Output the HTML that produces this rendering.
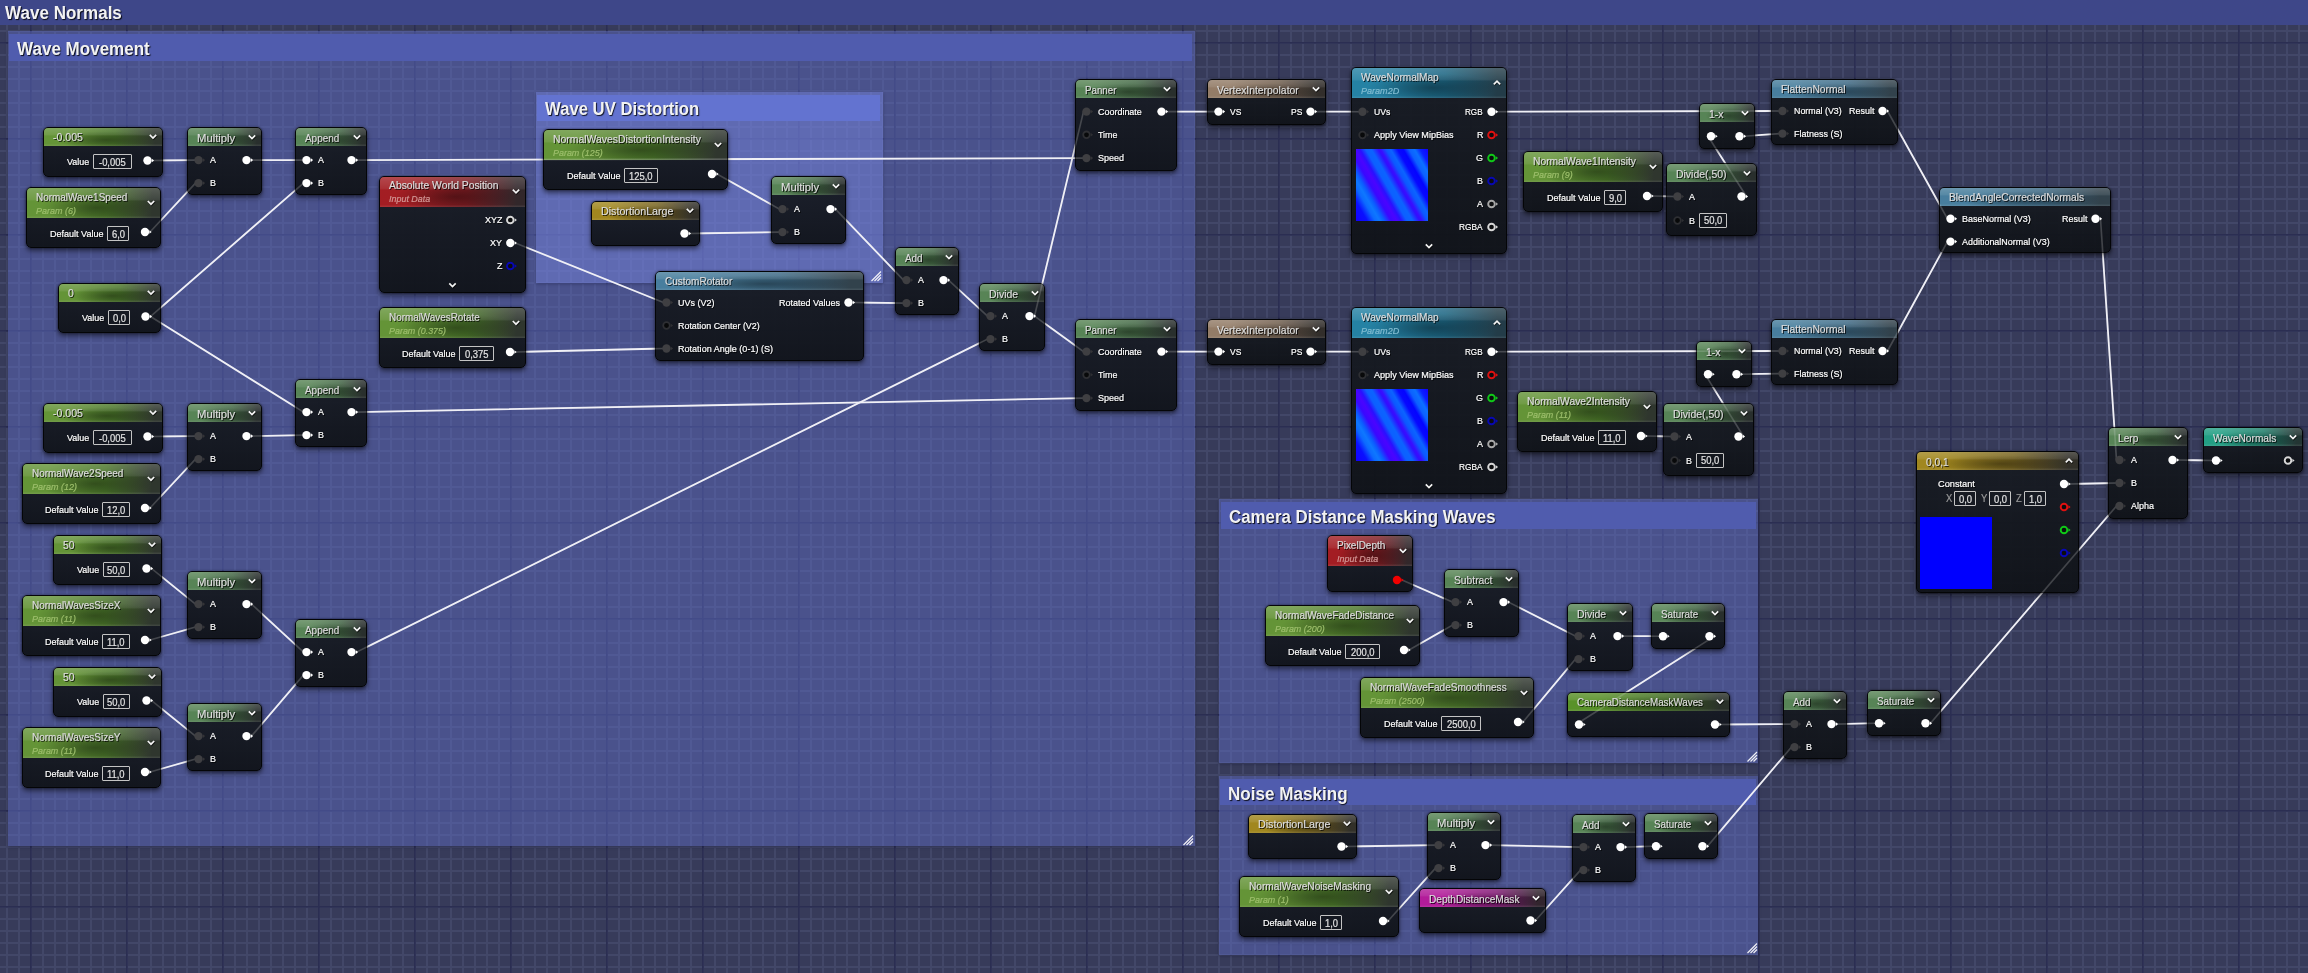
<!DOCTYPE html><html><head><meta charset="utf-8"><title>Wave Normals</title><style>

html,body{margin:0;padding:0}
body{width:2308px;height:973px;overflow:hidden;position:relative;background:#373b5a;font-family:"Liberation Sans",sans-serif}
#grid{position:absolute;left:0;top:0}
.t{position:absolute;white-space:nowrap;line-height:1.24;-webkit-text-stroke:.2px;transform-origin:0 50%;text-shadow:1px 1px 0 rgba(0,0,0,.8)}
.n{position:absolute;background:linear-gradient(180deg,rgba(23,27,34,.93),rgba(15,18,23,.94));border:1px solid #040507;border-radius:5px;box-shadow:0 3px 5px rgba(0,0,0,.5),0 0 2px rgba(0,0,0,.55)}
.h{position:absolute;left:0;top:0;right:0;border-radius:4px 4px 0 0;opacity:.97}
.vb{position:absolute;border:1px solid #c4c4c4;border-radius:1px}
.cb,.ct{position:absolute}
.cb{box-shadow:0 1px 3px rgba(10,10,40,.35)}
.tex{position:absolute;width:72px;height:72px;background:linear-gradient(60deg,#1400ff 0%,#0a10ff 10%,#0c6aff 17%,#0e78ff 21%,#0c5cff 25%,#3a08ff 31%,#4a04ff 36%,#2a10ff 40%,#0c60ff 45%,#0c64ff 50%,#3010ff 56%,#3a0cff 58%,#0c58ff 63%,#0c64ff 67%,#0808ff 73%,#0404ff 78%,#0c60ff 83%,#0c70ff 88%,#0a20ff 93%,#1000ff 100%)}
svg{position:absolute;left:0;top:0}
#wrap{position:absolute;left:0;top:0;width:2308px;height:973px;will-change:transform}
#wires line{stroke:#f0f0f6;stroke-width:1.8;stroke-linecap:round}
#wires2{opacity:.17}
#wires2 line{stroke:#f0f0f6;stroke-width:1.6}

</style></head><body>
<div id="wrap">
<svg id="grid" width="2308" height="973" viewBox="0 0 2308 973"><defs><pattern id="g1" width="12" height="12" patternUnits="userSpaceOnUse" x="6" y="6"><path d="M0 0H12V2H2V12H0Z" fill="#424768"/></pattern><pattern id="g2" width="96" height="96" patternUnits="userSpaceOnUse" x="30" y="42"><path d="M0 0H96V1.8H1.8V96H0Z" fill="#2b2e52"/></pattern></defs><rect width="2308" height="973" fill="#373b5a"/><rect width="2308" height="973" fill="url(#g1)"/><rect width="2308" height="973" fill="url(#g2)"/></svg>
<div class="ct" style="left:0;top:0;width:2308px;height:25px;background:#3e4789"></div>
<div class="t" style="left:5.0px;top:1.9px;font-size:18px;color:#f2f2f2;font-weight:bold;transform:scaleX(0.947);text-shadow:1px 1px 1px rgba(0,0,0,.85);-webkit-text-stroke:0;">Wave Normals</div>
<div class="cb" style="left:7.5px;top:31.3px;width:1187.0px;height:815.2px;background:rgba(97,110,201,.45)"></div>
<div class="ct" style="left:9.1px;top:34.3px;width:1182.8px;height:26.6px;background:#505cae"></div>
<div class="t" style="left:17.1px;top:38.4px;font-size:18px;color:#f2f2f2;font-weight:bold;transform:scaleX(0.946);text-shadow:1px 1px 1px rgba(0,0,0,.85);-webkit-text-stroke:0;">Wave Movement</div>
<div class="cb" style="left:535.5px;top:91.5px;width:347.0px;height:191.0px;background:rgba(140,155,255,.33)"></div>
<div class="ct" style="left:537.1px;top:94.5px;width:342.8px;height:26.6px;background:#6373d0"></div>
<div class="t" style="left:545.1px;top:97.6px;font-size:18px;color:#f2f2f2;font-weight:bold;transform:scaleX(0.927);text-shadow:1px 1px 1px rgba(0,0,0,.85);-webkit-text-stroke:0;">Wave UV Distortion</div>
<div class="cb" style="left:1219.2px;top:499.2px;width:539.3px;height:263.8px;background:rgba(97,110,201,.45)"></div>
<div class="ct" style="left:1220.8px;top:502.2px;width:535.0999999999999px;height:26.6px;background:#505cae"></div>
<div class="t" style="left:1228.8px;top:506.3px;font-size:18px;color:#f2f2f2;font-weight:bold;transform:scaleX(0.937);text-shadow:1px 1px 1px rgba(0,0,0,.85);-webkit-text-stroke:0;">Camera Distance Masking Waves</div>
<div class="cb" style="left:1218.8px;top:775.5px;width:539.7px;height:179.0px;background:rgba(97,110,201,.45)"></div>
<div class="ct" style="left:1220.3999999999999px;top:778.5px;width:535.5px;height:26.6px;background:#505cae"></div>
<div class="t" style="left:1228.4px;top:782.6px;font-size:18px;color:#f2f2f2;font-weight:bold;transform:scaleX(0.949);text-shadow:1px 1px 1px rgba(0,0,0,.85);-webkit-text-stroke:0;">Noise Masking</div>
<svg width="2308" height="973" viewBox="0 0 2308 973"><line x1="1183.5" y1="845.0" x2="1193.0" y2="835.5" stroke="#f0f0f6" stroke-width="1.15"/>
<line x1="1186.5" y1="845.0" x2="1193.0" y2="838.5" stroke="#f0f0f6" stroke-width="1.15"/>
<line x1="1189.5" y1="845.0" x2="1193.0" y2="841.5" stroke="#f0f0f6" stroke-width="1.15"/>
<line x1="871.5" y1="281.0" x2="881.0" y2="271.5" stroke="#f0f0f6" stroke-width="1.15"/>
<line x1="874.5" y1="281.0" x2="881.0" y2="274.5" stroke="#f0f0f6" stroke-width="1.15"/>
<line x1="877.5" y1="281.0" x2="881.0" y2="277.5" stroke="#f0f0f6" stroke-width="1.15"/>
<line x1="1747.5" y1="761.5" x2="1757.0" y2="752.0" stroke="#f0f0f6" stroke-width="1.15"/>
<line x1="1750.5" y1="761.5" x2="1757.0" y2="755.0" stroke="#f0f0f6" stroke-width="1.15"/>
<line x1="1753.5" y1="761.5" x2="1757.0" y2="758.0" stroke="#f0f0f6" stroke-width="1.15"/>
<line x1="1747.5" y1="953.0" x2="1757.0" y2="943.5" stroke="#f0f0f6" stroke-width="1.15"/>
<line x1="1750.5" y1="953.0" x2="1757.0" y2="946.5" stroke="#f0f0f6" stroke-width="1.15"/>
<line x1="1753.5" y1="953.0" x2="1757.0" y2="949.5" stroke="#f0f0f6" stroke-width="1.15"/></svg>
<svg id="wires" width="2308" height="973" viewBox="0 0 2308 973"><line x1="152.5" y1="160.5" x2="195.5" y2="160.1"/>
<line x1="150.0" y1="232" x2="195.5" y2="183.1"/>
<line x1="251.5" y1="160.1" x2="303.5" y2="160.1"/>
<line x1="150.5" y1="316.5" x2="303.5" y2="183.1"/>
<line x1="150.5" y1="316.5" x2="303.5" y2="412.1"/>
<line x1="152.5" y1="436.5" x2="195.5" y2="436.1"/>
<line x1="150.0" y1="508" x2="195.5" y2="459.1"/>
<line x1="251.5" y1="436.1" x2="303.5" y2="435.1"/>
<line x1="356.5" y1="160.1" x2="1083.5" y2="158.1"/>
<line x1="356.5" y1="412.1" x2="1083.5" y2="398.1"/>
<line x1="151.5" y1="568.5" x2="195.5" y2="604.1"/>
<line x1="150.0" y1="640" x2="195.5" y2="627.1"/>
<line x1="251.5" y1="604.1" x2="303.5" y2="652.1"/>
<line x1="151.5" y1="700.5" x2="195.5" y2="736.1"/>
<line x1="150.0" y1="772" x2="195.5" y2="759.1"/>
<line x1="251.5" y1="736.1" x2="303.5" y2="675.1"/>
<line x1="356.5" y1="652.1" x2="987.5" y2="339.1"/>
<line x1="515.3" y1="243" x2="663.5" y2="302.5"/>
<line x1="515.0" y1="352" x2="663.5" y2="348.5"/>
<line x1="717.0" y1="174" x2="779.5" y2="209.1"/>
<line x1="689.5" y1="233.5" x2="779.5" y2="232.1"/>
<line x1="835.5" y1="209.1" x2="903.5" y2="280.1"/>
<line x1="853.5" y1="302.5" x2="903.5" y2="303.1"/>
<line x1="948.5" y1="280.1" x2="987.5" y2="316.1"/>
<line x1="1034.5" y1="316.1" x2="1083.5" y2="111.6"/>
<line x1="1034.5" y1="316.1" x2="1083.5" y2="351.6"/>
<line x1="1166.5" y1="111.6" x2="1215.5" y2="111.6"/>
<line x1="1315.5" y1="111.6" x2="1359.5" y2="111.7"/>
<line x1="1496.5" y1="111.7" x2="1779.5" y2="111"/>
<line x1="1166.5" y1="351.6" x2="1215.5" y2="351.6"/>
<line x1="1315.5" y1="351.6" x2="1359.5" y2="351.7"/>
<line x1="1496.5" y1="351.7" x2="1779.5" y2="351"/>
<line x1="1652.0" y1="196" x2="1674.5" y2="196.5"/>
<line x1="1746.5" y1="196.5" x2="1708" y2="136.2"/>
<line x1="1744.5" y1="136.2" x2="1779.5" y2="133.6"/>
<line x1="1646.0" y1="436" x2="1671.5" y2="436.5"/>
<line x1="1743.5" y1="436.5" x2="1705" y2="374.2"/>
<line x1="1741.5" y1="374.2" x2="1779.5" y2="373.6"/>
<line x1="1887.5" y1="111" x2="1947.5" y2="218.8"/>
<line x1="1887.5" y1="351" x2="1947.5" y2="241.6"/>
<line x1="2100.5" y1="218.8" x2="2116.5" y2="460"/>
<line x1="2069" y1="484" x2="2116.5" y2="483"/>
<line x1="1930.5" y1="723.2" x2="2116.5" y2="506"/>
<line x1="2177.5" y1="460" x2="2213" y2="460.5"/>
<line x1="1402" y1="580" x2="1452.5" y2="602.1"/>
<line x1="1409.0" y1="650" x2="1452.5" y2="625.1"/>
<line x1="1508.5" y1="602.1" x2="1575.5" y2="636.1"/>
<line x1="1523.0" y1="722" x2="1575.5" y2="659.1"/>
<line x1="1622.5" y1="636.1" x2="1660" y2="636.2"/>
<line x1="1714.5" y1="636.2" x2="1576" y2="724.5"/>
<line x1="1720" y1="724.5" x2="1791.5" y2="724.1"/>
<line x1="1836.5" y1="724.1" x2="1876" y2="723.2"/>
<line x1="1707.5" y1="846.2" x2="1791.5" y2="747.1"/>
<line x1="1346.5" y1="846.5" x2="1435.5" y2="845.1"/>
<line x1="1388.0" y1="921" x2="1435.5" y2="868.1"/>
<line x1="1490.5" y1="845.1" x2="1580.5" y2="847.1"/>
<line x1="1535.5" y1="920.5" x2="1580.5" y2="870.1"/>
<line x1="1625.5" y1="847.1" x2="1653" y2="846.2"/></svg>
<div class="n" style="left:43px;top:127px;width:118px;height:48px"><div class="h" style="height:18px;background:linear-gradient(180deg,rgba(255,255,255,.20) 0,rgba(255,255,255,.09) 38%,rgba(255,255,255,0) 44%),radial-gradient(ellipse 42% 48% at 52% 66%,rgba(0,0,0,.36) 0,rgba(0,0,0,0) 100%),linear-gradient(0deg,rgba(255,255,255,.10) 0,rgba(255,255,255,0) 2.5px),linear-gradient(92deg,#679838 0%,#679838 18%,#4c782a 60%,#30372f 94%)"></div></div>
<div class="t" style="left:53.0px;top:131.2px;font-size:11px;color:#dcdcdc;transform:scaleX(0.959);">-0.005</div>
<div class="vb" style="left:93px;top:154.0px;width:37px;height:13.0px"></div>
<div class="t" style="left:99.2px;top:156.5px;font-size:10px;color:#e2e2e2;transform:scaleX(0.940);text-shadow:none;">-0,005</div>
<div class="t" style="left:67.0px;top:156.1px;font-size:9.5px;color:#fff;transform:scaleX(0.941);">Value</div>
<div class="n" style="left:26px;top:187px;width:133px;height:59px"><div class="h" style="height:30px;background:linear-gradient(180deg,rgba(255,255,255,.20) 0,rgba(255,255,255,.09) 38%,rgba(255,255,255,0) 44%),radial-gradient(ellipse 42% 48% at 52% 66%,rgba(0,0,0,.36) 0,rgba(0,0,0,0) 100%),linear-gradient(0deg,rgba(255,255,255,.10) 0,rgba(255,255,255,0) 2.5px),linear-gradient(92deg,#679838 0%,#679838 18%,#4c782a 60%,#30372f 94%)"></div></div>
<div class="t" style="left:36.0px;top:190.6px;font-size:11px;color:#dcdcdc;transform:scaleX(0.904);">NormalWave1Speed</div>
<div class="t" style="left:36.0px;top:204.8px;font-size:9.5px;color:#9dbf6c;font-style:italic;transform:scaleX(0.947);text-shadow:none;">Param (6)</div>
<div class="vb" style="left:107px;top:226px;width:20px;height:13px"></div>
<div class="t" style="left:111.5px;top:228.5px;font-size:10px;color:#e2e2e2;transform:scaleX(0.940);text-shadow:none;">6,0</div>
<div class="t" style="left:50.0px;top:227.7px;font-size:9.5px;color:#fff;transform:scaleX(0.950);">Default Value</div>
<div class="n" style="left:58px;top:283px;width:101px;height:48px"><div class="h" style="height:18px;background:linear-gradient(180deg,rgba(255,255,255,.20) 0,rgba(255,255,255,.09) 38%,rgba(255,255,255,0) 44%),radial-gradient(ellipse 42% 48% at 52% 66%,rgba(0,0,0,.36) 0,rgba(0,0,0,0) 100%),linear-gradient(0deg,rgba(255,255,255,.10) 0,rgba(255,255,255,0) 2.5px),linear-gradient(92deg,#679838 0%,#679838 18%,#4c782a 60%,#30372f 94%)"></div></div>
<div class="t" style="left:68.0px;top:287.2px;font-size:11px;color:#dcdcdc;transform:scaleX(0.940);">0</div>
<div class="vb" style="left:108px;top:310.0px;width:20px;height:13.0px"></div>
<div class="t" style="left:112.5px;top:312.5px;font-size:10px;color:#e2e2e2;transform:scaleX(0.940);text-shadow:none;">0,0</div>
<div class="t" style="left:82.0px;top:312.1px;font-size:9.5px;color:#fff;transform:scaleX(0.941);">Value</div>
<div class="n" style="left:43px;top:403px;width:118px;height:48px"><div class="h" style="height:18px;background:linear-gradient(180deg,rgba(255,255,255,.20) 0,rgba(255,255,255,.09) 38%,rgba(255,255,255,0) 44%),radial-gradient(ellipse 42% 48% at 52% 66%,rgba(0,0,0,.36) 0,rgba(0,0,0,0) 100%),linear-gradient(0deg,rgba(255,255,255,.10) 0,rgba(255,255,255,0) 2.5px),linear-gradient(92deg,#679838 0%,#679838 18%,#4c782a 60%,#30372f 94%)"></div></div>
<div class="t" style="left:53.0px;top:407.2px;font-size:11px;color:#dcdcdc;transform:scaleX(0.959);">-0.005</div>
<div class="vb" style="left:93px;top:430.0px;width:37px;height:13.0px"></div>
<div class="t" style="left:99.2px;top:432.5px;font-size:10px;color:#e2e2e2;transform:scaleX(0.940);text-shadow:none;">-0,005</div>
<div class="t" style="left:67.0px;top:432.1px;font-size:9.5px;color:#fff;transform:scaleX(0.941);">Value</div>
<div class="n" style="left:22px;top:463px;width:137px;height:59px"><div class="h" style="height:30px;background:linear-gradient(180deg,rgba(255,255,255,.20) 0,rgba(255,255,255,.09) 38%,rgba(255,255,255,0) 44%),radial-gradient(ellipse 42% 48% at 52% 66%,rgba(0,0,0,.36) 0,rgba(0,0,0,0) 100%),linear-gradient(0deg,rgba(255,255,255,.10) 0,rgba(255,255,255,0) 2.5px),linear-gradient(92deg,#679838 0%,#679838 18%,#4c782a 60%,#30372f 94%)"></div></div>
<div class="t" style="left:32.0px;top:466.6px;font-size:11px;color:#dcdcdc;transform:scaleX(0.904);">NormalWave2Speed</div>
<div class="t" style="left:32.0px;top:480.8px;font-size:9.5px;color:#9dbf6c;font-style:italic;transform:scaleX(0.947);text-shadow:none;">Param (12)</div>
<div class="vb" style="left:102px;top:502px;width:26px;height:13px"></div>
<div class="t" style="left:106.9px;top:504.5px;font-size:10px;color:#e2e2e2;transform:scaleX(0.940);text-shadow:none;">12,0</div>
<div class="t" style="left:45.0px;top:503.7px;font-size:9.5px;color:#fff;transform:scaleX(0.950);">Default Value</div>
<div class="n" style="left:53px;top:535px;width:107px;height:48px"><div class="h" style="height:18px;background:linear-gradient(180deg,rgba(255,255,255,.20) 0,rgba(255,255,255,.09) 38%,rgba(255,255,255,0) 44%),radial-gradient(ellipse 42% 48% at 52% 66%,rgba(0,0,0,.36) 0,rgba(0,0,0,0) 100%),linear-gradient(0deg,rgba(255,255,255,.10) 0,rgba(255,255,255,0) 2.5px),linear-gradient(92deg,#679838 0%,#679838 18%,#4c782a 60%,#30372f 94%)"></div></div>
<div class="t" style="left:63.0px;top:539.2px;font-size:11px;color:#dcdcdc;transform:scaleX(0.940);">50</div>
<div class="vb" style="left:103px;top:562.0px;width:25px;height:13.0px"></div>
<div class="t" style="left:107.4px;top:564.5px;font-size:10px;color:#e2e2e2;transform:scaleX(0.940);text-shadow:none;">50,0</div>
<div class="t" style="left:77.0px;top:564.1px;font-size:9.5px;color:#fff;transform:scaleX(0.941);">Value</div>
<div class="n" style="left:22px;top:595px;width:137px;height:59px"><div class="h" style="height:30px;background:linear-gradient(180deg,rgba(255,255,255,.20) 0,rgba(255,255,255,.09) 38%,rgba(255,255,255,0) 44%),radial-gradient(ellipse 42% 48% at 52% 66%,rgba(0,0,0,.36) 0,rgba(0,0,0,0) 100%),linear-gradient(0deg,rgba(255,255,255,.10) 0,rgba(255,255,255,0) 2.5px),linear-gradient(92deg,#679838 0%,#679838 18%,#4c782a 60%,#30372f 94%)"></div></div>
<div class="t" style="left:32.0px;top:598.6px;font-size:11px;color:#dcdcdc;transform:scaleX(0.908);">NormalWavesSizeX</div>
<div class="t" style="left:32.0px;top:612.8px;font-size:9.5px;color:#9dbf6c;font-style:italic;transform:scaleX(0.940);text-shadow:none;">Param (11)</div>
<div class="vb" style="left:102px;top:634px;width:26px;height:13px"></div>
<div class="t" style="left:107.2px;top:636.5px;font-size:10px;color:#e2e2e2;transform:scaleX(0.940);text-shadow:none;">11,0</div>
<div class="t" style="left:45.0px;top:635.7px;font-size:9.5px;color:#fff;transform:scaleX(0.950);">Default Value</div>
<div class="n" style="left:53px;top:667px;width:107px;height:48px"><div class="h" style="height:18px;background:linear-gradient(180deg,rgba(255,255,255,.20) 0,rgba(255,255,255,.09) 38%,rgba(255,255,255,0) 44%),radial-gradient(ellipse 42% 48% at 52% 66%,rgba(0,0,0,.36) 0,rgba(0,0,0,0) 100%),linear-gradient(0deg,rgba(255,255,255,.10) 0,rgba(255,255,255,0) 2.5px),linear-gradient(92deg,#679838 0%,#679838 18%,#4c782a 60%,#30372f 94%)"></div></div>
<div class="t" style="left:63.0px;top:671.2px;font-size:11px;color:#dcdcdc;transform:scaleX(0.940);">50</div>
<div class="vb" style="left:103px;top:694.0px;width:25px;height:13.0px"></div>
<div class="t" style="left:107.4px;top:696.5px;font-size:10px;color:#e2e2e2;transform:scaleX(0.940);text-shadow:none;">50,0</div>
<div class="t" style="left:77.0px;top:696.1px;font-size:9.5px;color:#fff;transform:scaleX(0.941);">Value</div>
<div class="n" style="left:22px;top:727px;width:137px;height:59px"><div class="h" style="height:30px;background:linear-gradient(180deg,rgba(255,255,255,.20) 0,rgba(255,255,255,.09) 38%,rgba(255,255,255,0) 44%),radial-gradient(ellipse 42% 48% at 52% 66%,rgba(0,0,0,.36) 0,rgba(0,0,0,0) 100%),linear-gradient(0deg,rgba(255,255,255,.10) 0,rgba(255,255,255,0) 2.5px),linear-gradient(92deg,#679838 0%,#679838 18%,#4c782a 60%,#30372f 94%)"></div></div>
<div class="t" style="left:32.0px;top:730.6px;font-size:11px;color:#dcdcdc;transform:scaleX(0.908);">NormalWavesSizeY</div>
<div class="t" style="left:32.0px;top:744.8px;font-size:9.5px;color:#9dbf6c;font-style:italic;transform:scaleX(0.940);text-shadow:none;">Param (11)</div>
<div class="vb" style="left:102px;top:766px;width:26px;height:13px"></div>
<div class="t" style="left:107.2px;top:768.5px;font-size:10px;color:#e2e2e2;transform:scaleX(0.940);text-shadow:none;">11,0</div>
<div class="t" style="left:45.0px;top:767.7px;font-size:9.5px;color:#fff;transform:scaleX(0.950);">Default Value</div>
<div class="n" style="left:187px;top:127px;width:73px;height:66px"><div class="h" style="height:18px;background:linear-gradient(180deg,rgba(255,255,255,.20) 0,rgba(255,255,255,.09) 38%,rgba(255,255,255,0) 44%),radial-gradient(ellipse 42% 48% at 52% 66%,rgba(0,0,0,.36) 0,rgba(0,0,0,0) 100%),linear-gradient(0deg,rgba(255,255,255,.10) 0,rgba(255,255,255,0) 2.5px),linear-gradient(92deg,#5a8858 0%,#5a8858 18%,#456b46 60%,#2a302e 94%)"></div></div>
<div class="t" style="left:197.0px;top:131.7px;font-size:11px;color:#dcdcdc;transform:scaleX(1.025);">Multiply</div>
<div class="t" style="left:209.7px;top:154.2px;font-size:9.5px;color:#fff;transform:scaleX(0.940);">A</div>
<div class="t" style="left:209.7px;top:177.2px;font-size:9.5px;color:#fff;transform:scaleX(0.940);">B</div>
<div class="n" style="left:187px;top:403px;width:73px;height:66px"><div class="h" style="height:18px;background:linear-gradient(180deg,rgba(255,255,255,.20) 0,rgba(255,255,255,.09) 38%,rgba(255,255,255,0) 44%),radial-gradient(ellipse 42% 48% at 52% 66%,rgba(0,0,0,.36) 0,rgba(0,0,0,0) 100%),linear-gradient(0deg,rgba(255,255,255,.10) 0,rgba(255,255,255,0) 2.5px),linear-gradient(92deg,#5a8858 0%,#5a8858 18%,#456b46 60%,#2a302e 94%)"></div></div>
<div class="t" style="left:197.0px;top:407.7px;font-size:11px;color:#dcdcdc;transform:scaleX(1.025);">Multiply</div>
<div class="t" style="left:209.7px;top:430.2px;font-size:9.5px;color:#fff;transform:scaleX(0.940);">A</div>
<div class="t" style="left:209.7px;top:453.2px;font-size:9.5px;color:#fff;transform:scaleX(0.940);">B</div>
<div class="n" style="left:187px;top:571px;width:73px;height:66px"><div class="h" style="height:18px;background:linear-gradient(180deg,rgba(255,255,255,.20) 0,rgba(255,255,255,.09) 38%,rgba(255,255,255,0) 44%),radial-gradient(ellipse 42% 48% at 52% 66%,rgba(0,0,0,.36) 0,rgba(0,0,0,0) 100%),linear-gradient(0deg,rgba(255,255,255,.10) 0,rgba(255,255,255,0) 2.5px),linear-gradient(92deg,#5a8858 0%,#5a8858 18%,#456b46 60%,#2a302e 94%)"></div></div>
<div class="t" style="left:197.0px;top:575.7px;font-size:11px;color:#dcdcdc;transform:scaleX(1.025);">Multiply</div>
<div class="t" style="left:209.7px;top:598.2px;font-size:9.5px;color:#fff;transform:scaleX(0.940);">A</div>
<div class="t" style="left:209.7px;top:621.2px;font-size:9.5px;color:#fff;transform:scaleX(0.940);">B</div>
<div class="n" style="left:187px;top:703px;width:73px;height:66px"><div class="h" style="height:18px;background:linear-gradient(180deg,rgba(255,255,255,.20) 0,rgba(255,255,255,.09) 38%,rgba(255,255,255,0) 44%),radial-gradient(ellipse 42% 48% at 52% 66%,rgba(0,0,0,.36) 0,rgba(0,0,0,0) 100%),linear-gradient(0deg,rgba(255,255,255,.10) 0,rgba(255,255,255,0) 2.5px),linear-gradient(92deg,#5a8858 0%,#5a8858 18%,#456b46 60%,#2a302e 94%)"></div></div>
<div class="t" style="left:197.0px;top:707.7px;font-size:11px;color:#dcdcdc;transform:scaleX(1.025);">Multiply</div>
<div class="t" style="left:209.7px;top:730.2px;font-size:9.5px;color:#fff;transform:scaleX(0.940);">A</div>
<div class="t" style="left:209.7px;top:753.2px;font-size:9.5px;color:#fff;transform:scaleX(0.940);">B</div>
<div class="n" style="left:295px;top:127px;width:70px;height:66px"><div class="h" style="height:18px;background:linear-gradient(180deg,rgba(255,255,255,.20) 0,rgba(255,255,255,.09) 38%,rgba(255,255,255,0) 44%),radial-gradient(ellipse 42% 48% at 52% 66%,rgba(0,0,0,.36) 0,rgba(0,0,0,0) 100%),linear-gradient(0deg,rgba(255,255,255,.10) 0,rgba(255,255,255,0) 2.5px),linear-gradient(92deg,#5a8858 0%,#5a8858 18%,#456b46 60%,#2a302e 94%)"></div></div>
<div class="t" style="left:305.0px;top:131.7px;font-size:11px;color:#dcdcdc;transform:scaleX(0.902);">Append</div>
<div class="t" style="left:317.7px;top:154.2px;font-size:9.5px;color:#fff;transform:scaleX(0.940);">A</div>
<div class="t" style="left:317.7px;top:177.2px;font-size:9.5px;color:#fff;transform:scaleX(0.940);">B</div>
<div class="n" style="left:295px;top:379px;width:70px;height:66px"><div class="h" style="height:18px;background:linear-gradient(180deg,rgba(255,255,255,.20) 0,rgba(255,255,255,.09) 38%,rgba(255,255,255,0) 44%),radial-gradient(ellipse 42% 48% at 52% 66%,rgba(0,0,0,.36) 0,rgba(0,0,0,0) 100%),linear-gradient(0deg,rgba(255,255,255,.10) 0,rgba(255,255,255,0) 2.5px),linear-gradient(92deg,#5a8858 0%,#5a8858 18%,#456b46 60%,#2a302e 94%)"></div></div>
<div class="t" style="left:305.0px;top:383.7px;font-size:11px;color:#dcdcdc;transform:scaleX(0.902);">Append</div>
<div class="t" style="left:317.7px;top:406.2px;font-size:9.5px;color:#fff;transform:scaleX(0.940);">A</div>
<div class="t" style="left:317.7px;top:429.2px;font-size:9.5px;color:#fff;transform:scaleX(0.940);">B</div>
<div class="n" style="left:295px;top:619px;width:70px;height:66px"><div class="h" style="height:18px;background:linear-gradient(180deg,rgba(255,255,255,.20) 0,rgba(255,255,255,.09) 38%,rgba(255,255,255,0) 44%),radial-gradient(ellipse 42% 48% at 52% 66%,rgba(0,0,0,.36) 0,rgba(0,0,0,0) 100%),linear-gradient(0deg,rgba(255,255,255,.10) 0,rgba(255,255,255,0) 2.5px),linear-gradient(92deg,#5a8858 0%,#5a8858 18%,#456b46 60%,#2a302e 94%)"></div></div>
<div class="t" style="left:305.0px;top:623.7px;font-size:11px;color:#dcdcdc;transform:scaleX(0.902);">Append</div>
<div class="t" style="left:317.7px;top:646.2px;font-size:9.5px;color:#fff;transform:scaleX(0.940);">A</div>
<div class="t" style="left:317.7px;top:669.2px;font-size:9.5px;color:#fff;transform:scaleX(0.940);">B</div>
<div class="n" style="left:379px;top:176px;width:145px;height:114.5px"><div class="h" style="height:30px;background:linear-gradient(180deg,rgba(255,255,255,.20) 0,rgba(255,255,255,.09) 38%,rgba(255,255,255,0) 44%),radial-gradient(ellipse 42% 48% at 52% 66%,rgba(0,0,0,.36) 0,rgba(0,0,0,0) 100%),linear-gradient(0deg,rgba(255,255,255,.10) 0,rgba(255,255,255,0) 2.5px),linear-gradient(92deg,#a81e23 0%,#a81e23 18%,#801c22 60%,#33282b 94%)"></div></div>
<div class="t" style="left:389.0px;top:179.2px;font-size:11px;color:#dcdcdc;transform:scaleX(0.940);">Absolute World Position</div>
<div class="t" style="left:389.0px;top:193.4px;font-size:9.5px;color:#d39896;font-style:italic;transform:scaleX(0.940);text-shadow:none;">Input Data</div>
<div class="t" style="left:484.6px;top:214.1px;font-size:9.5px;color:#fff;transform:scaleX(0.940);">XYZ</div>
<div class="t" style="left:490.1px;top:237.1px;font-size:9.5px;color:#fff;transform:scaleX(0.940);">XY</div>
<div class="t" style="left:496.5px;top:260.1px;font-size:9.5px;color:#fff;transform:scaleX(0.940);">Z</div>
<div class="n" style="left:379px;top:307px;width:145px;height:59px"><div class="h" style="height:30px;background:linear-gradient(180deg,rgba(255,255,255,.20) 0,rgba(255,255,255,.09) 38%,rgba(255,255,255,0) 44%),radial-gradient(ellipse 42% 48% at 52% 66%,rgba(0,0,0,.36) 0,rgba(0,0,0,0) 100%),linear-gradient(0deg,rgba(255,255,255,.10) 0,rgba(255,255,255,0) 2.5px),linear-gradient(92deg,#679838 0%,#679838 18%,#4c782a 60%,#30372f 94%)"></div></div>
<div class="t" style="left:389.0px;top:310.6px;font-size:11px;color:#dcdcdc;transform:scaleX(0.899);">NormalWavesRotate</div>
<div class="t" style="left:389.0px;top:324.8px;font-size:9.5px;color:#9dbf6c;font-style:italic;transform:scaleX(0.939);text-shadow:none;">Param (0.375)</div>
<div class="vb" style="left:459px;top:346px;width:33px;height:13px"></div>
<div class="t" style="left:464.7px;top:348.5px;font-size:10px;color:#e2e2e2;transform:scaleX(0.940);text-shadow:none;">0,375</div>
<div class="t" style="left:402.0px;top:347.7px;font-size:9.5px;color:#fff;transform:scaleX(0.950);">Default Value</div>
<div class="n" style="left:543px;top:129px;width:183px;height:59px"><div class="h" style="height:30px;background:linear-gradient(180deg,rgba(255,255,255,.20) 0,rgba(255,255,255,.09) 38%,rgba(255,255,255,0) 44%),radial-gradient(ellipse 42% 48% at 52% 66%,rgba(0,0,0,.36) 0,rgba(0,0,0,0) 100%),linear-gradient(0deg,rgba(255,255,255,.10) 0,rgba(255,255,255,0) 2.5px),linear-gradient(92deg,#679838 0%,#679838 18%,#4c782a 60%,#30372f 94%)"></div></div>
<div class="t" style="left:553.0px;top:132.6px;font-size:11px;color:#dcdcdc;transform:scaleX(0.948);">NormalWavesDistortionIntensity</div>
<div class="t" style="left:553.0px;top:146.8px;font-size:9.5px;color:#9dbf6c;font-style:italic;transform:scaleX(0.940);text-shadow:none;">Param (125)</div>
<div class="vb" style="left:624px;top:168px;width:32px;height:13px"></div>
<div class="t" style="left:629.2px;top:170.5px;font-size:10px;color:#e2e2e2;transform:scaleX(0.940);text-shadow:none;">125,0</div>
<div class="t" style="left:567.0px;top:169.7px;font-size:9.5px;color:#fff;transform:scaleX(0.950);">Default Value</div>
<div class="n" style="left:591px;top:201px;width:107px;height:43px"><div class="h" style="height:18px;background:linear-gradient(180deg,rgba(255,255,255,.20) 0,rgba(255,255,255,.09) 38%,rgba(255,255,255,0) 44%),radial-gradient(ellipse 42% 48% at 52% 66%,rgba(0,0,0,.36) 0,rgba(0,0,0,0) 100%),linear-gradient(0deg,rgba(255,255,255,.10) 0,rgba(255,255,255,0) 2.5px),linear-gradient(92deg,#a68b1f 0%,#a68b1f 18%,#7a6620 60%,#33312a 94%)"></div></div>
<div class="t" style="left:601.0px;top:205.2px;font-size:11px;color:#dcdcdc;transform:scaleX(0.972);">DistortionLarge</div>
<div class="n" style="left:771px;top:176px;width:73px;height:66px"><div class="h" style="height:18px;background:linear-gradient(180deg,rgba(255,255,255,.20) 0,rgba(255,255,255,.09) 38%,rgba(255,255,255,0) 44%),radial-gradient(ellipse 42% 48% at 52% 66%,rgba(0,0,0,.36) 0,rgba(0,0,0,0) 100%),linear-gradient(0deg,rgba(255,255,255,.10) 0,rgba(255,255,255,0) 2.5px),linear-gradient(92deg,#5a8858 0%,#5a8858 18%,#456b46 60%,#2a302e 94%)"></div></div>
<div class="t" style="left:781.0px;top:180.7px;font-size:11px;color:#dcdcdc;transform:scaleX(1.025);">Multiply</div>
<div class="t" style="left:793.7px;top:203.2px;font-size:9.5px;color:#fff;transform:scaleX(0.940);">A</div>
<div class="t" style="left:793.7px;top:226.2px;font-size:9.5px;color:#fff;transform:scaleX(0.940);">B</div>
<div class="n" style="left:895px;top:247px;width:62px;height:66px"><div class="h" style="height:18px;background:linear-gradient(180deg,rgba(255,255,255,.20) 0,rgba(255,255,255,.09) 38%,rgba(255,255,255,0) 44%),radial-gradient(ellipse 42% 48% at 52% 66%,rgba(0,0,0,.36) 0,rgba(0,0,0,0) 100%),linear-gradient(0deg,rgba(255,255,255,.10) 0,rgba(255,255,255,0) 2.5px),linear-gradient(92deg,#5a8858 0%,#5a8858 18%,#456b46 60%,#2a302e 94%)"></div></div>
<div class="t" style="left:905.0px;top:251.7px;font-size:11px;color:#dcdcdc;transform:scaleX(0.899);">Add</div>
<div class="t" style="left:917.7px;top:274.2px;font-size:9.5px;color:#fff;transform:scaleX(0.940);">A</div>
<div class="t" style="left:917.7px;top:297.2px;font-size:9.5px;color:#fff;transform:scaleX(0.940);">B</div>
<div class="n" style="left:655px;top:271px;width:207px;height:88px"><div class="h" style="height:18px;background:linear-gradient(180deg,rgba(255,255,255,.20) 0,rgba(255,255,255,.09) 38%,rgba(255,255,255,0) 44%),radial-gradient(ellipse 42% 48% at 52% 66%,rgba(0,0,0,.36) 0,rgba(0,0,0,0) 100%),linear-gradient(0deg,rgba(255,255,255,.10) 0,rgba(255,255,255,0) 2.5px),linear-gradient(92deg,#4a82a2 0%,#4a82a2 18%,#3f6c88 60%,#33444e 94%)"></div></div>
<div class="t" style="left:665.0px;top:275.2px;font-size:11px;color:#dcdcdc;transform:scaleX(0.909);">CustomRotator</div>
<div class="t" style="left:677.7px;top:296.6px;font-size:9.5px;color:#fff;transform:scaleX(0.945);">UVs (V2)</div>
<div class="t" style="left:779.0px;top:296.6px;font-size:9.5px;color:#fff;transform:scaleX(0.949);">Rotated Values</div>
<div class="t" style="left:677.7px;top:319.6px;font-size:9.5px;color:#fff;transform:scaleX(0.938);">Rotation Center (V2)</div>
<div class="t" style="left:677.7px;top:342.6px;font-size:9.5px;color:#fff;transform:scaleX(0.952);">Rotation Angle (0-1) (S)</div>
<div class="n" style="left:979px;top:283px;width:64px;height:66px"><div class="h" style="height:18px;background:linear-gradient(180deg,rgba(255,255,255,.20) 0,rgba(255,255,255,.09) 38%,rgba(255,255,255,0) 44%),radial-gradient(ellipse 42% 48% at 52% 66%,rgba(0,0,0,.36) 0,rgba(0,0,0,0) 100%),linear-gradient(0deg,rgba(255,255,255,.10) 0,rgba(255,255,255,0) 2.5px),linear-gradient(92deg,#5a8858 0%,#5a8858 18%,#456b46 60%,#2a302e 94%)"></div></div>
<div class="t" style="left:989.0px;top:287.7px;font-size:11px;color:#dcdcdc;transform:scaleX(0.952);">Divide</div>
<div class="t" style="left:1001.7px;top:310.2px;font-size:9.5px;color:#fff;transform:scaleX(0.940);">A</div>
<div class="t" style="left:1001.7px;top:333.2px;font-size:9.5px;color:#fff;transform:scaleX(0.940);">B</div>
<div class="n" style="left:1075px;top:79px;width:100px;height:90px"><div class="h" style="height:18px;background:linear-gradient(180deg,rgba(255,255,255,.20) 0,rgba(255,255,255,.09) 38%,rgba(255,255,255,0) 44%),radial-gradient(ellipse 42% 48% at 52% 66%,rgba(0,0,0,.36) 0,rgba(0,0,0,0) 100%),linear-gradient(0deg,rgba(255,255,255,.10) 0,rgba(255,255,255,0) 2.5px),linear-gradient(92deg,#5a8858 0%,#5a8858 18%,#456b46 60%,#2a302e 94%)"></div></div>
<div class="t" style="left:1085.0px;top:83.7px;font-size:11px;color:#dcdcdc;transform:scaleX(0.885);">Panner</div>
<div class="t" style="left:1097.7px;top:105.7px;font-size:9.5px;color:#fff;transform:scaleX(0.943);">Coordinate</div>
<div class="t" style="left:1097.7px;top:128.9px;font-size:9.5px;color:#fff;transform:scaleX(0.939);">Time</div>
<div class="t" style="left:1097.7px;top:152.2px;font-size:9.5px;color:#fff;transform:scaleX(0.947);">Speed</div>
<div class="n" style="left:1075px;top:319px;width:100px;height:90px"><div class="h" style="height:18px;background:linear-gradient(180deg,rgba(255,255,255,.20) 0,rgba(255,255,255,.09) 38%,rgba(255,255,255,0) 44%),radial-gradient(ellipse 42% 48% at 52% 66%,rgba(0,0,0,.36) 0,rgba(0,0,0,0) 100%),linear-gradient(0deg,rgba(255,255,255,.10) 0,rgba(255,255,255,0) 2.5px),linear-gradient(92deg,#5a8858 0%,#5a8858 18%,#456b46 60%,#2a302e 94%)"></div></div>
<div class="t" style="left:1085.0px;top:323.7px;font-size:11px;color:#dcdcdc;transform:scaleX(0.885);">Panner</div>
<div class="t" style="left:1097.7px;top:345.7px;font-size:9.5px;color:#fff;transform:scaleX(0.943);">Coordinate</div>
<div class="t" style="left:1097.7px;top:368.9px;font-size:9.5px;color:#fff;transform:scaleX(0.939);">Time</div>
<div class="t" style="left:1097.7px;top:392.2px;font-size:9.5px;color:#fff;transform:scaleX(0.947);">Speed</div>
<div class="n" style="left:1207px;top:79px;width:117px;height:44px"><div class="h" style="height:18px;background:linear-gradient(180deg,rgba(255,255,255,.20) 0,rgba(255,255,255,.09) 38%,rgba(255,255,255,0) 44%),radial-gradient(ellipse 42% 48% at 52% 66%,rgba(0,0,0,.36) 0,rgba(0,0,0,0) 100%),linear-gradient(0deg,rgba(255,255,255,.10) 0,rgba(255,255,255,0) 2.5px),linear-gradient(92deg,#98806a 0%,#98806a 18%,#73604f 60%,#332f2c 94%)"></div></div>
<div class="t" style="left:1217.0px;top:83.7px;font-size:11px;color:#dcdcdc;transform:scaleX(0.941);">VertexInterpolator</div>
<div class="t" style="left:1229.7px;top:105.7px;font-size:9.5px;color:#fff;transform:scaleX(0.892);">VS</div>
<div class="t" style="left:1290.7px;top:105.7px;font-size:9.5px;color:#fff;transform:scaleX(0.892);">PS</div>
<div class="n" style="left:1207px;top:319px;width:117px;height:44px"><div class="h" style="height:18px;background:linear-gradient(180deg,rgba(255,255,255,.20) 0,rgba(255,255,255,.09) 38%,rgba(255,255,255,0) 44%),radial-gradient(ellipse 42% 48% at 52% 66%,rgba(0,0,0,.36) 0,rgba(0,0,0,0) 100%),linear-gradient(0deg,rgba(255,255,255,.10) 0,rgba(255,255,255,0) 2.5px),linear-gradient(92deg,#98806a 0%,#98806a 18%,#73604f 60%,#332f2c 94%)"></div></div>
<div class="t" style="left:1217.0px;top:323.7px;font-size:11px;color:#dcdcdc;transform:scaleX(0.941);">VertexInterpolator</div>
<div class="t" style="left:1229.7px;top:345.7px;font-size:9.5px;color:#fff;transform:scaleX(0.892);">VS</div>
<div class="t" style="left:1290.7px;top:345.7px;font-size:9.5px;color:#fff;transform:scaleX(0.892);">PS</div>
<div class="n" style="left:1351px;top:67px;width:154px;height:184.5px"><div class="h" style="height:30px;background:linear-gradient(180deg,rgba(255,255,255,.20) 0,rgba(255,255,255,.09) 38%,rgba(255,255,255,0) 44%),radial-gradient(ellipse 42% 48% at 52% 66%,rgba(0,0,0,.36) 0,rgba(0,0,0,0) 100%),linear-gradient(0deg,rgba(255,255,255,.10) 0,rgba(255,255,255,0) 2.5px),linear-gradient(92deg,#2686a9 0%,#2686a9 18%,#1c6886 60%,#243e4a 94%)"></div></div>
<div class="t" style="left:1361.0px;top:70.7px;font-size:11px;color:#dcdcdc;transform:scaleX(0.919);">WaveNormalMap</div>
<div class="t" style="left:1361.0px;top:84.9px;font-size:9.5px;color:#82bdd2;font-style:italic;transform:scaleX(0.952);text-shadow:none;">Param2D</div>
<div class="t" style="left:1373.7px;top:105.8px;font-size:9.5px;color:#fff;transform:scaleX(0.908);">UVs</div>
<div class="t" style="left:1465.4px;top:105.8px;font-size:9.5px;color:#fff;transform:scaleX(0.855);">RGB</div>
<div class="t" style="left:1373.7px;top:129.1px;font-size:9.5px;color:#fff;transform:scaleX(0.957);">Apply View MipBias</div>
<div class="t" style="left:1476.6px;top:129.1px;font-size:9.5px;color:#fff;transform:scaleX(0.940);">R</div>
<div class="t" style="left:1476.1px;top:152.1px;font-size:9.5px;color:#fff;transform:scaleX(0.940);">G</div>
<div class="t" style="left:1477.0px;top:175.1px;font-size:9.5px;color:#fff;transform:scaleX(0.940);">B</div>
<div class="t" style="left:1477.0px;top:198.1px;font-size:9.5px;color:#fff;transform:scaleX(0.940);">A</div>
<div class="t" style="left:1459.4px;top:221.1px;font-size:9.5px;color:#fff;transform:scaleX(0.877);">RGBA</div>
<div class="tex" style="left:1356px;top:149px"></div>
<div class="n" style="left:1351px;top:307px;width:154px;height:184.5px"><div class="h" style="height:30px;background:linear-gradient(180deg,rgba(255,255,255,.20) 0,rgba(255,255,255,.09) 38%,rgba(255,255,255,0) 44%),radial-gradient(ellipse 42% 48% at 52% 66%,rgba(0,0,0,.36) 0,rgba(0,0,0,0) 100%),linear-gradient(0deg,rgba(255,255,255,.10) 0,rgba(255,255,255,0) 2.5px),linear-gradient(92deg,#2686a9 0%,#2686a9 18%,#1c6886 60%,#243e4a 94%)"></div></div>
<div class="t" style="left:1361.0px;top:310.7px;font-size:11px;color:#dcdcdc;transform:scaleX(0.919);">WaveNormalMap</div>
<div class="t" style="left:1361.0px;top:324.9px;font-size:9.5px;color:#82bdd2;font-style:italic;transform:scaleX(0.952);text-shadow:none;">Param2D</div>
<div class="t" style="left:1373.7px;top:345.8px;font-size:9.5px;color:#fff;transform:scaleX(0.908);">UVs</div>
<div class="t" style="left:1465.4px;top:345.8px;font-size:9.5px;color:#fff;transform:scaleX(0.855);">RGB</div>
<div class="t" style="left:1373.7px;top:369.1px;font-size:9.5px;color:#fff;transform:scaleX(0.957);">Apply View MipBias</div>
<div class="t" style="left:1476.6px;top:369.1px;font-size:9.5px;color:#fff;transform:scaleX(0.940);">R</div>
<div class="t" style="left:1476.1px;top:392.1px;font-size:9.5px;color:#fff;transform:scaleX(0.940);">G</div>
<div class="t" style="left:1477.0px;top:415.1px;font-size:9.5px;color:#fff;transform:scaleX(0.940);">B</div>
<div class="t" style="left:1477.0px;top:438.1px;font-size:9.5px;color:#fff;transform:scaleX(0.940);">A</div>
<div class="t" style="left:1459.4px;top:461.1px;font-size:9.5px;color:#fff;transform:scaleX(0.877);">RGBA</div>
<div class="tex" style="left:1356px;top:389px"></div>
<div class="n" style="left:1523px;top:151px;width:138px;height:59px"><div class="h" style="height:30px;background:linear-gradient(180deg,rgba(255,255,255,.20) 0,rgba(255,255,255,.09) 38%,rgba(255,255,255,0) 44%),radial-gradient(ellipse 42% 48% at 52% 66%,rgba(0,0,0,.36) 0,rgba(0,0,0,0) 100%),linear-gradient(0deg,rgba(255,255,255,.10) 0,rgba(255,255,255,0) 2.5px),linear-gradient(92deg,#679838 0%,#679838 18%,#4c782a 60%,#30372f 94%)"></div></div>
<div class="t" style="left:1533.0px;top:154.6px;font-size:11px;color:#dcdcdc;transform:scaleX(0.934);">NormalWave1Intensity</div>
<div class="t" style="left:1533.0px;top:168.8px;font-size:9.5px;color:#9dbf6c;font-style:italic;transform:scaleX(0.940);text-shadow:none;">Param (9)</div>
<div class="vb" style="left:1604px;top:190px;width:20px;height:13px"></div>
<div class="t" style="left:1608.5px;top:192.5px;font-size:10px;color:#e2e2e2;transform:scaleX(0.940);text-shadow:none;">9,0</div>
<div class="t" style="left:1547.0px;top:191.7px;font-size:9.5px;color:#fff;transform:scaleX(0.950);">Default Value</div>
<div class="n" style="left:1517px;top:391px;width:138px;height:59px"><div class="h" style="height:30px;background:linear-gradient(180deg,rgba(255,255,255,.20) 0,rgba(255,255,255,.09) 38%,rgba(255,255,255,0) 44%),radial-gradient(ellipse 42% 48% at 52% 66%,rgba(0,0,0,.36) 0,rgba(0,0,0,0) 100%),linear-gradient(0deg,rgba(255,255,255,.10) 0,rgba(255,255,255,0) 2.5px),linear-gradient(92deg,#679838 0%,#679838 18%,#4c782a 60%,#30372f 94%)"></div></div>
<div class="t" style="left:1527.0px;top:394.6px;font-size:11px;color:#dcdcdc;transform:scaleX(0.934);">NormalWave2Intensity</div>
<div class="t" style="left:1527.0px;top:408.8px;font-size:9.5px;color:#9dbf6c;font-style:italic;transform:scaleX(0.940);text-shadow:none;">Param (11)</div>
<div class="vb" style="left:1598px;top:430px;width:26px;height:13px"></div>
<div class="t" style="left:1603.2px;top:432.5px;font-size:10px;color:#e2e2e2;transform:scaleX(0.940);text-shadow:none;">11,0</div>
<div class="t" style="left:1541.0px;top:431.7px;font-size:9.5px;color:#fff;transform:scaleX(0.950);">Default Value</div>
<div class="n" style="left:1666px;top:163px;width:89px;height:71px"><div class="h" style="height:18px;background:linear-gradient(180deg,rgba(255,255,255,.20) 0,rgba(255,255,255,.09) 38%,rgba(255,255,255,0) 44%),radial-gradient(ellipse 42% 48% at 52% 66%,rgba(0,0,0,.36) 0,rgba(0,0,0,0) 100%),linear-gradient(0deg,rgba(255,255,255,.10) 0,rgba(255,255,255,0) 2.5px),linear-gradient(92deg,#5a8858 0%,#5a8858 18%,#456b46 60%,#2a302e 94%)"></div></div>
<div class="t" style="left:1676.0px;top:167.8px;font-size:11px;color:#dcdcdc;transform:scaleX(0.950);">Divide(,50)</div>
<div class="t" style="left:1688.7px;top:190.6px;font-size:9.5px;color:#fff;transform:scaleX(0.940);">A</div>
<div class="t" style="left:1688.7px;top:214.6px;font-size:9.5px;color:#fff;transform:scaleX(0.940);">B</div>
<div class="vb" style="left:1699px;top:212.8px;width:26px;height:13.0px"></div>
<div class="t" style="left:1703.9px;top:215.3px;font-size:10px;color:#e2e2e2;transform:scaleX(0.940);text-shadow:none;">50,0</div>
<div class="n" style="left:1663px;top:403px;width:89px;height:71px"><div class="h" style="height:18px;background:linear-gradient(180deg,rgba(255,255,255,.20) 0,rgba(255,255,255,.09) 38%,rgba(255,255,255,0) 44%),radial-gradient(ellipse 42% 48% at 52% 66%,rgba(0,0,0,.36) 0,rgba(0,0,0,0) 100%),linear-gradient(0deg,rgba(255,255,255,.10) 0,rgba(255,255,255,0) 2.5px),linear-gradient(92deg,#5a8858 0%,#5a8858 18%,#456b46 60%,#2a302e 94%)"></div></div>
<div class="t" style="left:1673.0px;top:407.8px;font-size:11px;color:#dcdcdc;transform:scaleX(0.950);">Divide(,50)</div>
<div class="t" style="left:1685.7px;top:430.6px;font-size:9.5px;color:#fff;transform:scaleX(0.940);">A</div>
<div class="t" style="left:1685.7px;top:454.6px;font-size:9.5px;color:#fff;transform:scaleX(0.940);">B</div>
<div class="vb" style="left:1696px;top:452.8px;width:26px;height:13.0px"></div>
<div class="t" style="left:1700.9px;top:455.3px;font-size:10px;color:#e2e2e2;transform:scaleX(0.940);text-shadow:none;">50,0</div>
<div class="n" style="left:1699px;top:103px;width:54px;height:44px"><div class="h" style="height:18px;background:linear-gradient(180deg,rgba(255,255,255,.20) 0,rgba(255,255,255,.09) 38%,rgba(255,255,255,0) 44%),radial-gradient(ellipse 42% 48% at 52% 66%,rgba(0,0,0,.36) 0,rgba(0,0,0,0) 100%),linear-gradient(0deg,rgba(255,255,255,.10) 0,rgba(255,255,255,0) 2.5px),linear-gradient(92deg,#5a8858 0%,#5a8858 18%,#456b46 60%,#2a302e 94%)"></div></div>
<div class="t" style="left:1709.0px;top:107.7px;font-size:11px;color:#dcdcdc;transform:scaleX(0.956);">1-x</div>
<div class="n" style="left:1696px;top:341px;width:54px;height:44px"><div class="h" style="height:18px;background:linear-gradient(180deg,rgba(255,255,255,.20) 0,rgba(255,255,255,.09) 38%,rgba(255,255,255,0) 44%),radial-gradient(ellipse 42% 48% at 52% 66%,rgba(0,0,0,.36) 0,rgba(0,0,0,0) 100%),linear-gradient(0deg,rgba(255,255,255,.10) 0,rgba(255,255,255,0) 2.5px),linear-gradient(92deg,#5a8858 0%,#5a8858 18%,#456b46 60%,#2a302e 94%)"></div></div>
<div class="t" style="left:1706.0px;top:345.7px;font-size:11px;color:#dcdcdc;transform:scaleX(0.956);">1-x</div>
<div class="n" style="left:1771px;top:79px;width:125px;height:64px"><div class="h" style="height:18px;background:linear-gradient(180deg,rgba(255,255,255,.20) 0,rgba(255,255,255,.09) 38%,rgba(255,255,255,0) 44%),radial-gradient(ellipse 42% 48% at 52% 66%,rgba(0,0,0,.36) 0,rgba(0,0,0,0) 100%),linear-gradient(0deg,rgba(255,255,255,.10) 0,rgba(255,255,255,0) 2.5px),linear-gradient(92deg,#4a82a2 0%,#4a82a2 18%,#3f6c88 60%,#33444e 94%)"></div></div>
<div class="t" style="left:1781.0px;top:82.9px;font-size:11px;color:#dcdcdc;transform:scaleX(0.935);">FlattenNormal</div>
<div class="t" style="left:1793.7px;top:105.1px;font-size:9.5px;color:#fff;transform:scaleX(0.932);">Normal (V3)</div>
<div class="t" style="left:1848.6px;top:105.1px;font-size:9.5px;color:#fff;transform:scaleX(0.943);">Result</div>
<div class="t" style="left:1793.7px;top:127.7px;font-size:9.5px;color:#fff;transform:scaleX(0.947);">Flatness (S)</div>
<div class="n" style="left:1771px;top:319px;width:125px;height:64px"><div class="h" style="height:18px;background:linear-gradient(180deg,rgba(255,255,255,.20) 0,rgba(255,255,255,.09) 38%,rgba(255,255,255,0) 44%),radial-gradient(ellipse 42% 48% at 52% 66%,rgba(0,0,0,.36) 0,rgba(0,0,0,0) 100%),linear-gradient(0deg,rgba(255,255,255,.10) 0,rgba(255,255,255,0) 2.5px),linear-gradient(92deg,#4a82a2 0%,#4a82a2 18%,#3f6c88 60%,#33444e 94%)"></div></div>
<div class="t" style="left:1781.0px;top:322.9px;font-size:11px;color:#dcdcdc;transform:scaleX(0.935);">FlattenNormal</div>
<div class="t" style="left:1793.7px;top:345.1px;font-size:9.5px;color:#fff;transform:scaleX(0.932);">Normal (V3)</div>
<div class="t" style="left:1848.6px;top:345.1px;font-size:9.5px;color:#fff;transform:scaleX(0.943);">Result</div>
<div class="t" style="left:1793.7px;top:367.7px;font-size:9.5px;color:#fff;transform:scaleX(0.947);">Flatness (S)</div>
<div class="n" style="left:1939px;top:187px;width:170px;height:64px"><div class="h" style="height:18px;background:linear-gradient(180deg,rgba(255,255,255,.20) 0,rgba(255,255,255,.09) 38%,rgba(255,255,255,0) 44%),radial-gradient(ellipse 42% 48% at 52% 66%,rgba(0,0,0,.36) 0,rgba(0,0,0,0) 100%),linear-gradient(0deg,rgba(255,255,255,.10) 0,rgba(255,255,255,0) 2.5px),linear-gradient(92deg,#4a82a2 0%,#4a82a2 18%,#3f6c88 60%,#33444e 94%)"></div></div>
<div class="t" style="left:1949.0px;top:190.5px;font-size:11px;color:#dcdcdc;transform:scaleX(0.929);">BlendAngleCorrectedNormals</div>
<div class="t" style="left:1961.7px;top:212.9px;font-size:9.5px;color:#fff;transform:scaleX(0.944);">BaseNormal (V3)</div>
<div class="t" style="left:2061.6px;top:212.9px;font-size:9.5px;color:#fff;transform:scaleX(0.943);">Result</div>
<div class="t" style="left:1961.7px;top:235.7px;font-size:9.5px;color:#fff;transform:scaleX(0.943);">AdditionalNormal (V3)</div>
<div class="n" style="left:1916px;top:451px;width:161px;height:140px"><div class="h" style="height:18px;background:linear-gradient(180deg,rgba(255,255,255,.20) 0,rgba(255,255,255,.09) 38%,rgba(255,255,255,0) 44%),radial-gradient(ellipse 42% 48% at 52% 66%,rgba(0,0,0,.36) 0,rgba(0,0,0,0) 100%),linear-gradient(0deg,rgba(255,255,255,.10) 0,rgba(255,255,255,0) 2.5px),linear-gradient(92deg,#a68b1f 0%,#a68b1f 18%,#7a6620 60%,#33312a 94%)"></div></div>
<div class="t" style="left:1926.0px;top:455.5px;font-size:11px;color:#dcdcdc;transform:scaleX(0.924);">0,0,1</div>
<div class="t" style="left:1938.0px;top:478.1px;font-size:9.5px;color:#fff;transform:scaleX(0.971);">Constant</div>
<div class="t" style="left:1946.0px;top:493.3px;font-size:10px;color:#9a9a9a;transform:scaleX(0.940);text-shadow:none;">X</div>
<div class="vb" style="left:1954px;top:491px;width:20px;height:13px"></div>
<div class="t" style="left:1958.5px;top:493.5px;font-size:10px;color:#e2e2e2;transform:scaleX(0.940);text-shadow:none;">0,0</div>
<div class="t" style="left:1981.0px;top:493.3px;font-size:10px;color:#9a9a9a;transform:scaleX(0.940);text-shadow:none;">Y</div>
<div class="vb" style="left:1989px;top:491px;width:20px;height:13px"></div>
<div class="t" style="left:1993.5px;top:493.5px;font-size:10px;color:#e2e2e2;transform:scaleX(0.940);text-shadow:none;">0,0</div>
<div class="t" style="left:2016.0px;top:493.3px;font-size:10px;color:#9a9a9a;transform:scaleX(0.940);text-shadow:none;">Z</div>
<div class="vb" style="left:2024px;top:491px;width:20px;height:13px"></div>
<div class="t" style="left:2028.5px;top:493.5px;font-size:10px;color:#e2e2e2;transform:scaleX(0.940);text-shadow:none;">1,0</div>
<div style="position:absolute;left:1920px;top:517px;width:72px;height:72px;background:#0000ff"></div>
<div class="n" style="left:2108px;top:427px;width:78px;height:90px"><div class="h" style="height:18px;background:linear-gradient(180deg,rgba(255,255,255,.20) 0,rgba(255,255,255,.09) 38%,rgba(255,255,255,0) 44%),radial-gradient(ellipse 42% 48% at 52% 66%,rgba(0,0,0,.36) 0,rgba(0,0,0,0) 100%),linear-gradient(0deg,rgba(255,255,255,.10) 0,rgba(255,255,255,0) 2.5px),linear-gradient(92deg,#5a8858 0%,#5a8858 18%,#456b46 60%,#2a302e 94%)"></div></div>
<div class="t" style="left:2118.0px;top:431.7px;font-size:11px;color:#dcdcdc;transform:scaleX(0.922);">Lerp</div>
<div class="t" style="left:2130.7px;top:454.1px;font-size:9.5px;color:#fff;transform:scaleX(0.940);">A</div>
<div class="t" style="left:2130.7px;top:477.1px;font-size:9.5px;color:#fff;transform:scaleX(0.940);">B</div>
<div class="t" style="left:2130.7px;top:500.1px;font-size:9.5px;color:#fff;transform:scaleX(0.947);">Alpha</div>
<div class="n" style="left:2203px;top:427px;width:98px;height:44px"><div class="h" style="height:18px;background:linear-gradient(180deg,rgba(255,255,255,.20) 0,rgba(255,255,255,.09) 38%,rgba(255,255,255,0) 44%),radial-gradient(ellipse 42% 48% at 52% 66%,rgba(0,0,0,.36) 0,rgba(0,0,0,0) 100%),linear-gradient(0deg,rgba(255,255,255,.10) 0,rgba(255,255,255,0) 2.5px),linear-gradient(92deg,#24a488 0%,#24a488 18%,#1e816c 60%,#243634 94%)"></div></div>
<div class="t" style="left:2213.0px;top:431.7px;font-size:11px;color:#dcdcdc;transform:scaleX(0.922);">WaveNormals</div>
<div class="n" style="left:1327px;top:535px;width:84px;height:55px"><div class="h" style="height:30px;background:linear-gradient(180deg,rgba(255,255,255,.20) 0,rgba(255,255,255,.09) 38%,rgba(255,255,255,0) 44%),radial-gradient(ellipse 42% 48% at 52% 66%,rgba(0,0,0,.36) 0,rgba(0,0,0,0) 100%),linear-gradient(0deg,rgba(255,255,255,.10) 0,rgba(255,255,255,0) 2.5px),linear-gradient(92deg,#a81e23 0%,#a81e23 18%,#801c22 60%,#33282b 94%)"></div></div>
<div class="t" style="left:1337.0px;top:538.7px;font-size:11px;color:#dcdcdc;transform:scaleX(0.908);">PixelDepth</div>
<div class="t" style="left:1337.0px;top:552.9px;font-size:9.5px;color:#d39896;font-style:italic;transform:scaleX(0.940);text-shadow:none;">Input Data</div>
<div class="n" style="left:1265px;top:605px;width:153px;height:59px"><div class="h" style="height:30px;background:linear-gradient(180deg,rgba(255,255,255,.20) 0,rgba(255,255,255,.09) 38%,rgba(255,255,255,0) 44%),radial-gradient(ellipse 42% 48% at 52% 66%,rgba(0,0,0,.36) 0,rgba(0,0,0,0) 100%),linear-gradient(0deg,rgba(255,255,255,.10) 0,rgba(255,255,255,0) 2.5px),linear-gradient(92deg,#679838 0%,#679838 18%,#4c782a 60%,#30372f 94%)"></div></div>
<div class="t" style="left:1275.0px;top:608.6px;font-size:11px;color:#dcdcdc;transform:scaleX(0.909);">NormalWaveFadeDistance</div>
<div class="t" style="left:1275.0px;top:622.8px;font-size:9.5px;color:#9dbf6c;font-style:italic;transform:scaleX(0.940);text-shadow:none;">Param (200)</div>
<div class="vb" style="left:1345px;top:644px;width:33px;height:13px"></div>
<div class="t" style="left:1350.7px;top:646.5px;font-size:10px;color:#e2e2e2;transform:scaleX(0.940);text-shadow:none;">200,0</div>
<div class="t" style="left:1288.0px;top:645.7px;font-size:9.5px;color:#fff;transform:scaleX(0.950);">Default Value</div>
<div class="n" style="left:1444px;top:569px;width:73px;height:66px"><div class="h" style="height:18px;background:linear-gradient(180deg,rgba(255,255,255,.20) 0,rgba(255,255,255,.09) 38%,rgba(255,255,255,0) 44%),radial-gradient(ellipse 42% 48% at 52% 66%,rgba(0,0,0,.36) 0,rgba(0,0,0,0) 100%),linear-gradient(0deg,rgba(255,255,255,.10) 0,rgba(255,255,255,0) 2.5px),linear-gradient(92deg,#5a8858 0%,#5a8858 18%,#456b46 60%,#2a302e 94%)"></div></div>
<div class="t" style="left:1454.0px;top:573.7px;font-size:11px;color:#dcdcdc;transform:scaleX(0.935);">Subtract</div>
<div class="t" style="left:1466.7px;top:596.2px;font-size:9.5px;color:#fff;transform:scaleX(0.940);">A</div>
<div class="t" style="left:1466.7px;top:619.2px;font-size:9.5px;color:#fff;transform:scaleX(0.940);">B</div>
<div class="n" style="left:1567px;top:603px;width:64px;height:66px"><div class="h" style="height:18px;background:linear-gradient(180deg,rgba(255,255,255,.20) 0,rgba(255,255,255,.09) 38%,rgba(255,255,255,0) 44%),radial-gradient(ellipse 42% 48% at 52% 66%,rgba(0,0,0,.36) 0,rgba(0,0,0,0) 100%),linear-gradient(0deg,rgba(255,255,255,.10) 0,rgba(255,255,255,0) 2.5px),linear-gradient(92deg,#5a8858 0%,#5a8858 18%,#456b46 60%,#2a302e 94%)"></div></div>
<div class="t" style="left:1577.0px;top:607.7px;font-size:11px;color:#dcdcdc;transform:scaleX(0.952);">Divide</div>
<div class="t" style="left:1589.7px;top:630.2px;font-size:9.5px;color:#fff;transform:scaleX(0.940);">A</div>
<div class="t" style="left:1589.7px;top:653.2px;font-size:9.5px;color:#fff;transform:scaleX(0.940);">B</div>
<div class="n" style="left:1651px;top:603px;width:72px;height:44px"><div class="h" style="height:18px;background:linear-gradient(180deg,rgba(255,255,255,.20) 0,rgba(255,255,255,.09) 38%,rgba(255,255,255,0) 44%),radial-gradient(ellipse 42% 48% at 52% 66%,rgba(0,0,0,.36) 0,rgba(0,0,0,0) 100%),linear-gradient(0deg,rgba(255,255,255,.10) 0,rgba(255,255,255,0) 2.5px),linear-gradient(92deg,#5a8858 0%,#5a8858 18%,#456b46 60%,#2a302e 94%)"></div></div>
<div class="t" style="left:1661.0px;top:607.7px;font-size:11px;color:#dcdcdc;transform:scaleX(0.892);">Saturate</div>
<div class="n" style="left:1360px;top:677px;width:172px;height:59px"><div class="h" style="height:30px;background:linear-gradient(180deg,rgba(255,255,255,.20) 0,rgba(255,255,255,.09) 38%,rgba(255,255,255,0) 44%),radial-gradient(ellipse 42% 48% at 52% 66%,rgba(0,0,0,.36) 0,rgba(0,0,0,0) 100%),linear-gradient(0deg,rgba(255,255,255,.10) 0,rgba(255,255,255,0) 2.5px),linear-gradient(92deg,#679838 0%,#679838 18%,#4c782a 60%,#30372f 94%)"></div></div>
<div class="t" style="left:1370.0px;top:680.6px;font-size:11px;color:#dcdcdc;transform:scaleX(0.915);">NormalWaveFadeSmoothness</div>
<div class="t" style="left:1370.0px;top:694.8px;font-size:9.5px;color:#9dbf6c;font-style:italic;transform:scaleX(0.940);text-shadow:none;">Param (2500)</div>
<div class="vb" style="left:1441px;top:716px;width:38px;height:13px"></div>
<div class="t" style="left:1446.6px;top:718.5px;font-size:10px;color:#e2e2e2;transform:scaleX(0.940);text-shadow:none;">2500,0</div>
<div class="t" style="left:1384.0px;top:717.7px;font-size:9.5px;color:#fff;transform:scaleX(0.950);">Default Value</div>
<div class="n" style="left:1567px;top:692px;width:161px;height:43px"><div class="h" style="height:18px;background:linear-gradient(180deg,rgba(255,255,255,.20) 0,rgba(255,255,255,.09) 38%,rgba(255,255,255,0) 44%),radial-gradient(ellipse 42% 48% at 52% 66%,rgba(0,0,0,.36) 0,rgba(0,0,0,0) 100%),linear-gradient(0deg,rgba(255,255,255,.10) 0,rgba(255,255,255,0) 2.5px),linear-gradient(92deg,#5c962a 0%,#5c962a 18%,#457224 60%,#2b322b 94%)"></div></div>
<div class="t" style="left:1577.0px;top:696.2px;font-size:11px;color:#dcdcdc;transform:scaleX(0.891);">CameraDistanceMaskWaves</div>
<div class="n" style="left:1783px;top:691px;width:62px;height:66px"><div class="h" style="height:18px;background:linear-gradient(180deg,rgba(255,255,255,.20) 0,rgba(255,255,255,.09) 38%,rgba(255,255,255,0) 44%),radial-gradient(ellipse 42% 48% at 52% 66%,rgba(0,0,0,.36) 0,rgba(0,0,0,0) 100%),linear-gradient(0deg,rgba(255,255,255,.10) 0,rgba(255,255,255,0) 2.5px),linear-gradient(92deg,#5a8858 0%,#5a8858 18%,#456b46 60%,#2a302e 94%)"></div></div>
<div class="t" style="left:1793.0px;top:695.7px;font-size:11px;color:#dcdcdc;transform:scaleX(0.899);">Add</div>
<div class="t" style="left:1805.7px;top:718.2px;font-size:9.5px;color:#fff;transform:scaleX(0.940);">A</div>
<div class="t" style="left:1805.7px;top:741.2px;font-size:9.5px;color:#fff;transform:scaleX(0.940);">B</div>
<div class="n" style="left:1867px;top:690px;width:72px;height:44px"><div class="h" style="height:18px;background:linear-gradient(180deg,rgba(255,255,255,.20) 0,rgba(255,255,255,.09) 38%,rgba(255,255,255,0) 44%),radial-gradient(ellipse 42% 48% at 52% 66%,rgba(0,0,0,.36) 0,rgba(0,0,0,0) 100%),linear-gradient(0deg,rgba(255,255,255,.10) 0,rgba(255,255,255,0) 2.5px),linear-gradient(92deg,#5a8858 0%,#5a8858 18%,#456b46 60%,#2a302e 94%)"></div></div>
<div class="t" style="left:1877.0px;top:694.7px;font-size:11px;color:#dcdcdc;transform:scaleX(0.892);">Saturate</div>
<div class="n" style="left:1248px;top:814px;width:107px;height:43px"><div class="h" style="height:18px;background:linear-gradient(180deg,rgba(255,255,255,.20) 0,rgba(255,255,255,.09) 38%,rgba(255,255,255,0) 44%),radial-gradient(ellipse 42% 48% at 52% 66%,rgba(0,0,0,.36) 0,rgba(0,0,0,0) 100%),linear-gradient(0deg,rgba(255,255,255,.10) 0,rgba(255,255,255,0) 2.5px),linear-gradient(92deg,#a68b1f 0%,#a68b1f 18%,#7a6620 60%,#33312a 94%)"></div></div>
<div class="t" style="left:1258.0px;top:818.2px;font-size:11px;color:#dcdcdc;transform:scaleX(0.972);">DistortionLarge</div>
<div class="n" style="left:1427px;top:812px;width:72px;height:66px"><div class="h" style="height:18px;background:linear-gradient(180deg,rgba(255,255,255,.20) 0,rgba(255,255,255,.09) 38%,rgba(255,255,255,0) 44%),radial-gradient(ellipse 42% 48% at 52% 66%,rgba(0,0,0,.36) 0,rgba(0,0,0,0) 100%),linear-gradient(0deg,rgba(255,255,255,.10) 0,rgba(255,255,255,0) 2.5px),linear-gradient(92deg,#5a8858 0%,#5a8858 18%,#456b46 60%,#2a302e 94%)"></div></div>
<div class="t" style="left:1437.0px;top:816.7px;font-size:11px;color:#dcdcdc;transform:scaleX(1.025);">Multiply</div>
<div class="t" style="left:1449.7px;top:839.2px;font-size:9.5px;color:#fff;transform:scaleX(0.940);">A</div>
<div class="t" style="left:1449.7px;top:862.2px;font-size:9.5px;color:#fff;transform:scaleX(0.940);">B</div>
<div class="n" style="left:1572px;top:814px;width:62px;height:66px"><div class="h" style="height:18px;background:linear-gradient(180deg,rgba(255,255,255,.20) 0,rgba(255,255,255,.09) 38%,rgba(255,255,255,0) 44%),radial-gradient(ellipse 42% 48% at 52% 66%,rgba(0,0,0,.36) 0,rgba(0,0,0,0) 100%),linear-gradient(0deg,rgba(255,255,255,.10) 0,rgba(255,255,255,0) 2.5px),linear-gradient(92deg,#5a8858 0%,#5a8858 18%,#456b46 60%,#2a302e 94%)"></div></div>
<div class="t" style="left:1582.0px;top:818.7px;font-size:11px;color:#dcdcdc;transform:scaleX(0.899);">Add</div>
<div class="t" style="left:1594.7px;top:841.2px;font-size:9.5px;color:#fff;transform:scaleX(0.940);">A</div>
<div class="t" style="left:1594.7px;top:864.2px;font-size:9.5px;color:#fff;transform:scaleX(0.940);">B</div>
<div class="n" style="left:1644px;top:813px;width:72px;height:44px"><div class="h" style="height:18px;background:linear-gradient(180deg,rgba(255,255,255,.20) 0,rgba(255,255,255,.09) 38%,rgba(255,255,255,0) 44%),radial-gradient(ellipse 42% 48% at 52% 66%,rgba(0,0,0,.36) 0,rgba(0,0,0,0) 100%),linear-gradient(0deg,rgba(255,255,255,.10) 0,rgba(255,255,255,0) 2.5px),linear-gradient(92deg,#5a8858 0%,#5a8858 18%,#456b46 60%,#2a302e 94%)"></div></div>
<div class="t" style="left:1654.0px;top:817.7px;font-size:11px;color:#dcdcdc;transform:scaleX(0.892);">Saturate</div>
<div class="n" style="left:1239px;top:876px;width:158px;height:59px"><div class="h" style="height:30px;background:linear-gradient(180deg,rgba(255,255,255,.20) 0,rgba(255,255,255,.09) 38%,rgba(255,255,255,0) 44%),radial-gradient(ellipse 42% 48% at 52% 66%,rgba(0,0,0,.36) 0,rgba(0,0,0,0) 100%),linear-gradient(0deg,rgba(255,255,255,.10) 0,rgba(255,255,255,0) 2.5px),linear-gradient(92deg,#679838 0%,#679838 18%,#4c782a 60%,#30372f 94%)"></div></div>
<div class="t" style="left:1249.0px;top:879.6px;font-size:11px;color:#dcdcdc;transform:scaleX(0.923);">NormalWaveNoiseMasking</div>
<div class="t" style="left:1249.0px;top:893.8px;font-size:9.5px;color:#9dbf6c;font-style:italic;transform:scaleX(0.940);text-shadow:none;">Param (1)</div>
<div class="vb" style="left:1320px;top:915px;width:20px;height:13px"></div>
<div class="t" style="left:1324.5px;top:917.5px;font-size:10px;color:#e2e2e2;transform:scaleX(0.940);text-shadow:none;">1,0</div>
<div class="t" style="left:1263.0px;top:916.7px;font-size:9.5px;color:#fff;transform:scaleX(0.950);">Default Value</div>
<div class="n" style="left:1419px;top:888px;width:125px;height:43px"><div class="h" style="height:18px;background:linear-gradient(180deg,rgba(255,255,255,.20) 0,rgba(255,255,255,.09) 38%,rgba(255,255,255,0) 44%),radial-gradient(ellipse 42% 48% at 52% 66%,rgba(0,0,0,.36) 0,rgba(0,0,0,0) 100%),linear-gradient(0deg,rgba(255,255,255,.10) 0,rgba(255,255,255,0) 2.5px),linear-gradient(92deg,#b81c9e 0%,#b81c9e 18%,#861a78 60%,#33262f 94%)"></div></div>
<div class="t" style="left:1429.0px;top:892.7px;font-size:11px;color:#dcdcdc;transform:scaleX(0.919);">DepthDistanceMask</div>
<svg id="wires2" width="2308" height="973" viewBox="0 0 2308 973"><line x1="152.5" y1="160.5" x2="195.5" y2="160.1"/>
<line x1="150.0" y1="232" x2="195.5" y2="183.1"/>
<line x1="251.5" y1="160.1" x2="303.5" y2="160.1"/>
<line x1="150.5" y1="316.5" x2="303.5" y2="183.1"/>
<line x1="150.5" y1="316.5" x2="303.5" y2="412.1"/>
<line x1="152.5" y1="436.5" x2="195.5" y2="436.1"/>
<line x1="150.0" y1="508" x2="195.5" y2="459.1"/>
<line x1="251.5" y1="436.1" x2="303.5" y2="435.1"/>
<line x1="356.5" y1="160.1" x2="1083.5" y2="158.1"/>
<line x1="356.5" y1="412.1" x2="1083.5" y2="398.1"/>
<line x1="151.5" y1="568.5" x2="195.5" y2="604.1"/>
<line x1="150.0" y1="640" x2="195.5" y2="627.1"/>
<line x1="251.5" y1="604.1" x2="303.5" y2="652.1"/>
<line x1="151.5" y1="700.5" x2="195.5" y2="736.1"/>
<line x1="150.0" y1="772" x2="195.5" y2="759.1"/>
<line x1="251.5" y1="736.1" x2="303.5" y2="675.1"/>
<line x1="356.5" y1="652.1" x2="987.5" y2="339.1"/>
<line x1="515.3" y1="243" x2="663.5" y2="302.5"/>
<line x1="515.0" y1="352" x2="663.5" y2="348.5"/>
<line x1="717.0" y1="174" x2="779.5" y2="209.1"/>
<line x1="689.5" y1="233.5" x2="779.5" y2="232.1"/>
<line x1="835.5" y1="209.1" x2="903.5" y2="280.1"/>
<line x1="853.5" y1="302.5" x2="903.5" y2="303.1"/>
<line x1="948.5" y1="280.1" x2="987.5" y2="316.1"/>
<line x1="1034.5" y1="316.1" x2="1083.5" y2="111.6"/>
<line x1="1034.5" y1="316.1" x2="1083.5" y2="351.6"/>
<line x1="1166.5" y1="111.6" x2="1215.5" y2="111.6"/>
<line x1="1315.5" y1="111.6" x2="1359.5" y2="111.7"/>
<line x1="1496.5" y1="111.7" x2="1779.5" y2="111"/>
<line x1="1166.5" y1="351.6" x2="1215.5" y2="351.6"/>
<line x1="1315.5" y1="351.6" x2="1359.5" y2="351.7"/>
<line x1="1496.5" y1="351.7" x2="1779.5" y2="351"/>
<line x1="1652.0" y1="196" x2="1674.5" y2="196.5"/>
<line x1="1746.5" y1="196.5" x2="1708" y2="136.2"/>
<line x1="1744.5" y1="136.2" x2="1779.5" y2="133.6"/>
<line x1="1646.0" y1="436" x2="1671.5" y2="436.5"/>
<line x1="1743.5" y1="436.5" x2="1705" y2="374.2"/>
<line x1="1741.5" y1="374.2" x2="1779.5" y2="373.6"/>
<line x1="1887.5" y1="111" x2="1947.5" y2="218.8"/>
<line x1="1887.5" y1="351" x2="1947.5" y2="241.6"/>
<line x1="2100.5" y1="218.8" x2="2116.5" y2="460"/>
<line x1="2069" y1="484" x2="2116.5" y2="483"/>
<line x1="1930.5" y1="723.2" x2="2116.5" y2="506"/>
<line x1="2177.5" y1="460" x2="2213" y2="460.5"/>
<line x1="1402" y1="580" x2="1452.5" y2="602.1"/>
<line x1="1409.0" y1="650" x2="1452.5" y2="625.1"/>
<line x1="1508.5" y1="602.1" x2="1575.5" y2="636.1"/>
<line x1="1523.0" y1="722" x2="1575.5" y2="659.1"/>
<line x1="1622.5" y1="636.1" x2="1660" y2="636.2"/>
<line x1="1714.5" y1="636.2" x2="1576" y2="724.5"/>
<line x1="1720" y1="724.5" x2="1791.5" y2="724.1"/>
<line x1="1836.5" y1="724.1" x2="1876" y2="723.2"/>
<line x1="1707.5" y1="846.2" x2="1791.5" y2="747.1"/>
<line x1="1346.5" y1="846.5" x2="1435.5" y2="845.1"/>
<line x1="1388.0" y1="921" x2="1435.5" y2="868.1"/>
<line x1="1490.5" y1="845.1" x2="1580.5" y2="847.1"/>
<line x1="1535.5" y1="920.5" x2="1580.5" y2="870.1"/>
<line x1="1625.5" y1="847.1" x2="1653" y2="846.2"/></svg>
<svg id="pins" width="2308" height="973" viewBox="0 0 2308 973"><path d="M149.8 134.9 L153 138.1 L156.2 134.9" fill="none" stroke="#000" stroke-opacity=".6" stroke-width="2" transform="translate(0.6,0.8)"/>
<path d="M149.8 134.9 L153 138.1 L156.2 134.9" fill="none" stroke="#f4f4f4" stroke-width="1.7"/>
<circle cx="147.5" cy="160.5" r="4.2" fill="#fff"/>
<path d="M151.9 158.7 L154.1 160.5 L151.9 162.3Z" fill="#fff"/>
<path d="M147.8 201.0 L151 204.2 L154.2 201.0" fill="none" stroke="#000" stroke-opacity=".6" stroke-width="2" transform="translate(0.6,0.8)"/>
<path d="M147.8 201.0 L151 204.2 L154.2 201.0" fill="none" stroke="#f4f4f4" stroke-width="1.7"/>
<circle cx="145.0" cy="232" r="4.2" fill="#fff"/>
<path d="M149.4 230.2 L151.6 232 L149.4 233.8Z" fill="#fff"/>
<path d="M147.8 290.9 L151 294.1 L154.2 290.9" fill="none" stroke="#000" stroke-opacity=".6" stroke-width="2" transform="translate(0.6,0.8)"/>
<path d="M147.8 290.9 L151 294.1 L154.2 290.9" fill="none" stroke="#f4f4f4" stroke-width="1.7"/>
<circle cx="145.5" cy="316.5" r="4.2" fill="#fff"/>
<path d="M149.9 314.7 L152.1 316.5 L149.9 318.3Z" fill="#fff"/>
<path d="M149.8 410.9 L153 414.1 L156.2 410.9" fill="none" stroke="#000" stroke-opacity=".6" stroke-width="2" transform="translate(0.6,0.8)"/>
<path d="M149.8 410.9 L153 414.1 L156.2 410.9" fill="none" stroke="#f4f4f4" stroke-width="1.7"/>
<circle cx="147.5" cy="436.5" r="4.2" fill="#fff"/>
<path d="M151.9 434.7 L154.1 436.5 L151.9 438.3Z" fill="#fff"/>
<path d="M147.8 476.99999999999994 L151 480.2 L154.2 476.99999999999994" fill="none" stroke="#000" stroke-opacity=".6" stroke-width="2" transform="translate(0.6,0.8)"/>
<path d="M147.8 476.99999999999994 L151 480.2 L154.2 476.99999999999994" fill="none" stroke="#f4f4f4" stroke-width="1.7"/>
<circle cx="145.0" cy="508" r="4.2" fill="#fff"/>
<path d="M149.4 506.2 L151.6 508 L149.4 509.8Z" fill="#fff"/>
<path d="M148.8 542.9 L152 546.1 L155.2 542.9" fill="none" stroke="#000" stroke-opacity=".6" stroke-width="2" transform="translate(0.6,0.8)"/>
<path d="M148.8 542.9 L152 546.1 L155.2 542.9" fill="none" stroke="#f4f4f4" stroke-width="1.7"/>
<circle cx="146.5" cy="568.5" r="4.2" fill="#fff"/>
<path d="M150.9 566.7 L153.1 568.5 L150.9 570.3Z" fill="#fff"/>
<path d="M147.8 609.0 L151 612.2 L154.2 609.0" fill="none" stroke="#000" stroke-opacity=".6" stroke-width="2" transform="translate(0.6,0.8)"/>
<path d="M147.8 609.0 L151 612.2 L154.2 609.0" fill="none" stroke="#f4f4f4" stroke-width="1.7"/>
<circle cx="145.0" cy="640" r="4.2" fill="#fff"/>
<path d="M149.4 638.2 L151.6 640 L149.4 641.8Z" fill="#fff"/>
<path d="M148.8 674.9 L152 678.1 L155.2 674.9" fill="none" stroke="#000" stroke-opacity=".6" stroke-width="2" transform="translate(0.6,0.8)"/>
<path d="M148.8 674.9 L152 678.1 L155.2 674.9" fill="none" stroke="#f4f4f4" stroke-width="1.7"/>
<circle cx="146.5" cy="700.5" r="4.2" fill="#fff"/>
<path d="M150.9 698.7 L153.1 700.5 L150.9 702.3Z" fill="#fff"/>
<path d="M147.8 741.0 L151 744.2 L154.2 741.0" fill="none" stroke="#000" stroke-opacity=".6" stroke-width="2" transform="translate(0.6,0.8)"/>
<path d="M147.8 741.0 L151 744.2 L154.2 741.0" fill="none" stroke="#f4f4f4" stroke-width="1.7"/>
<circle cx="145.0" cy="772" r="4.2" fill="#fff"/>
<path d="M149.4 770.2 L151.6 772 L149.4 773.8Z" fill="#fff"/>
<path d="M248.8 135.4 L252 138.6 L255.2 135.4" fill="none" stroke="#000" stroke-opacity=".6" stroke-width="2" transform="translate(0.6,0.8)"/>
<path d="M248.8 135.4 L252 138.6 L255.2 135.4" fill="none" stroke="#f4f4f4" stroke-width="1.7"/>
<circle cx="198.5" cy="160.1" r="4.2" fill="#3f3f42"/>
<path d="M202.9 158.3 L205.1 160.1 L202.9 161.9Z" fill="#343437"/>
<circle cx="246.5" cy="160.1" r="4.2" fill="#fff"/>
<path d="M250.9 158.3 L253.1 160.1 L250.9 161.9Z" fill="#fff"/>
<circle cx="198.5" cy="183.1" r="4.2" fill="#3f3f42"/>
<path d="M202.9 181.3 L205.1 183.1 L202.9 184.9Z" fill="#343437"/>
<path d="M248.8 411.4 L252 414.6 L255.2 411.4" fill="none" stroke="#000" stroke-opacity=".6" stroke-width="2" transform="translate(0.6,0.8)"/>
<path d="M248.8 411.4 L252 414.6 L255.2 411.4" fill="none" stroke="#f4f4f4" stroke-width="1.7"/>
<circle cx="198.5" cy="436.1" r="4.2" fill="#3f3f42"/>
<path d="M202.9 434.3 L205.1 436.1 L202.9 437.9Z" fill="#343437"/>
<circle cx="246.5" cy="436.1" r="4.2" fill="#fff"/>
<path d="M250.9 434.3 L253.1 436.1 L250.9 437.9Z" fill="#fff"/>
<circle cx="198.5" cy="459.1" r="4.2" fill="#3f3f42"/>
<path d="M202.9 457.3 L205.1 459.1 L202.9 460.9Z" fill="#343437"/>
<path d="M248.8 579.4 L252 582.6 L255.2 579.4" fill="none" stroke="#000" stroke-opacity=".6" stroke-width="2" transform="translate(0.6,0.8)"/>
<path d="M248.8 579.4 L252 582.6 L255.2 579.4" fill="none" stroke="#f4f4f4" stroke-width="1.7"/>
<circle cx="198.5" cy="604.1" r="4.2" fill="#3f3f42"/>
<path d="M202.9 602.3 L205.1 604.1 L202.9 605.9Z" fill="#343437"/>
<circle cx="246.5" cy="604.1" r="4.2" fill="#fff"/>
<path d="M250.9 602.3 L253.1 604.1 L250.9 605.9Z" fill="#fff"/>
<circle cx="198.5" cy="627.1" r="4.2" fill="#3f3f42"/>
<path d="M202.9 625.3 L205.1 627.1 L202.9 628.9Z" fill="#343437"/>
<path d="M248.8 711.4 L252 714.6 L255.2 711.4" fill="none" stroke="#000" stroke-opacity=".6" stroke-width="2" transform="translate(0.6,0.8)"/>
<path d="M248.8 711.4 L252 714.6 L255.2 711.4" fill="none" stroke="#f4f4f4" stroke-width="1.7"/>
<circle cx="198.5" cy="736.1" r="4.2" fill="#3f3f42"/>
<path d="M202.9 734.3 L205.1 736.1 L202.9 737.9Z" fill="#343437"/>
<circle cx="246.5" cy="736.1" r="4.2" fill="#fff"/>
<path d="M250.9 734.3 L253.1 736.1 L250.9 737.9Z" fill="#fff"/>
<circle cx="198.5" cy="759.1" r="4.2" fill="#3f3f42"/>
<path d="M202.9 757.3 L205.1 759.1 L202.9 760.9Z" fill="#343437"/>
<path d="M353.8 135.4 L357 138.6 L360.2 135.4" fill="none" stroke="#000" stroke-opacity=".6" stroke-width="2" transform="translate(0.6,0.8)"/>
<path d="M353.8 135.4 L357 138.6 L360.2 135.4" fill="none" stroke="#f4f4f4" stroke-width="1.7"/>
<circle cx="306.5" cy="160.1" r="4.2" fill="#fff"/>
<path d="M310.9 158.3 L313.1 160.1 L310.9 161.9Z" fill="#fff"/>
<circle cx="351.5" cy="160.1" r="4.2" fill="#fff"/>
<path d="M355.9 158.3 L358.1 160.1 L355.9 161.9Z" fill="#fff"/>
<circle cx="306.5" cy="183.1" r="4.2" fill="#fff"/>
<path d="M310.9 181.3 L313.1 183.1 L310.9 184.9Z" fill="#fff"/>
<path d="M353.8 387.4 L357 390.6 L360.2 387.4" fill="none" stroke="#000" stroke-opacity=".6" stroke-width="2" transform="translate(0.6,0.8)"/>
<path d="M353.8 387.4 L357 390.6 L360.2 387.4" fill="none" stroke="#f4f4f4" stroke-width="1.7"/>
<circle cx="306.5" cy="412.1" r="4.2" fill="#fff"/>
<path d="M310.9 410.3 L313.1 412.1 L310.9 413.9Z" fill="#fff"/>
<circle cx="351.5" cy="412.1" r="4.2" fill="#fff"/>
<path d="M355.9 410.3 L358.1 412.1 L355.9 413.9Z" fill="#fff"/>
<circle cx="306.5" cy="435.1" r="4.2" fill="#fff"/>
<path d="M310.9 433.3 L313.1 435.1 L310.9 436.9Z" fill="#fff"/>
<path d="M353.8 627.4 L357 630.6 L360.2 627.4" fill="none" stroke="#000" stroke-opacity=".6" stroke-width="2" transform="translate(0.6,0.8)"/>
<path d="M353.8 627.4 L357 630.6 L360.2 627.4" fill="none" stroke="#f4f4f4" stroke-width="1.7"/>
<circle cx="306.5" cy="652.1" r="4.2" fill="#fff"/>
<path d="M310.9 650.3 L313.1 652.1 L310.9 653.9Z" fill="#fff"/>
<circle cx="351.5" cy="652.1" r="4.2" fill="#fff"/>
<path d="M355.9 650.3 L358.1 652.1 L355.9 653.9Z" fill="#fff"/>
<circle cx="306.5" cy="675.1" r="4.2" fill="#fff"/>
<path d="M310.9 673.3 L313.1 675.1 L310.9 676.9Z" fill="#fff"/>
<path d="M512.8 189.6 L516 192.79999999999998 L519.2 189.6" fill="none" stroke="#000" stroke-opacity=".6" stroke-width="2" transform="translate(0.6,0.8)"/>
<path d="M512.8 189.6 L516 192.79999999999998 L519.2 189.6" fill="none" stroke="#f4f4f4" stroke-width="1.7"/>
<circle cx="510.3" cy="220" r="3.3000000000000003" fill="#0c0d0f" stroke="#d8d8d8" stroke-width="1.9"/>
<path d="M514.7 218.2 L516.9 220 L514.7 221.8Z" fill="#d8d8d8"/>
<circle cx="510.3" cy="243" r="4.2" fill="#fff"/>
<path d="M514.7 241.2 L516.9 243 L514.7 244.8Z" fill="#fff"/>
<circle cx="510.3" cy="266" r="3.3000000000000003" fill="#0c0d0f" stroke="#0808b4" stroke-width="1.9"/>
<path d="M514.7 264.2 L516.9 266 L514.7 267.8Z" fill="#0808b4"/>
<path d="M449.3 283.4 L452.5 286.6 L455.7 283.4" fill="none" stroke="#000" stroke-opacity=".6" stroke-width="2" transform="translate(0.6,0.8)"/>
<path d="M449.3 283.4 L452.5 286.6 L455.7 283.4" fill="none" stroke="#f4f4f4" stroke-width="1.7"/>
<path d="M512.8 320.99999999999994 L516 324.2 L519.2 320.99999999999994" fill="none" stroke="#000" stroke-opacity=".6" stroke-width="2" transform="translate(0.6,0.8)"/>
<path d="M512.8 320.99999999999994 L516 324.2 L519.2 320.99999999999994" fill="none" stroke="#f4f4f4" stroke-width="1.7"/>
<circle cx="510.0" cy="352" r="4.2" fill="#fff"/>
<path d="M514.4 350.2 L516.6 352 L514.4 353.8Z" fill="#fff"/>
<path d="M714.8 143.0 L718 146.2 L721.2 143.0" fill="none" stroke="#000" stroke-opacity=".6" stroke-width="2" transform="translate(0.6,0.8)"/>
<path d="M714.8 143.0 L718 146.2 L721.2 143.0" fill="none" stroke="#f4f4f4" stroke-width="1.7"/>
<circle cx="712.0" cy="174" r="4.2" fill="#fff"/>
<path d="M716.4 172.2 L718.6 174 L716.4 175.8Z" fill="#fff"/>
<path d="M686.8 208.9 L690 212.1 L693.2 208.9" fill="none" stroke="#000" stroke-opacity=".6" stroke-width="2" transform="translate(0.6,0.8)"/>
<path d="M686.8 208.9 L690 212.1 L693.2 208.9" fill="none" stroke="#f4f4f4" stroke-width="1.7"/>
<circle cx="684.5" cy="233.5" r="4.2" fill="#fff"/>
<path d="M688.9 231.7 L691.1 233.5 L688.9 235.3Z" fill="#fff"/>
<path d="M832.8 184.4 L836 187.6 L839.2 184.4" fill="none" stroke="#000" stroke-opacity=".6" stroke-width="2" transform="translate(0.6,0.8)"/>
<path d="M832.8 184.4 L836 187.6 L839.2 184.4" fill="none" stroke="#f4f4f4" stroke-width="1.7"/>
<circle cx="782.5" cy="209.1" r="4.2" fill="#3f3f42"/>
<path d="M786.9 207.3 L789.1 209.1 L786.9 210.9Z" fill="#343437"/>
<circle cx="830.5" cy="209.1" r="4.2" fill="#fff"/>
<path d="M834.9 207.3 L837.1 209.1 L834.9 210.9Z" fill="#fff"/>
<circle cx="782.5" cy="232.1" r="4.2" fill="#3f3f42"/>
<path d="M786.9 230.3 L789.1 232.1 L786.9 233.9Z" fill="#343437"/>
<path d="M945.8 255.4 L949 258.6 L952.2 255.4" fill="none" stroke="#000" stroke-opacity=".6" stroke-width="2" transform="translate(0.6,0.8)"/>
<path d="M945.8 255.4 L949 258.6 L952.2 255.4" fill="none" stroke="#f4f4f4" stroke-width="1.7"/>
<circle cx="906.5" cy="280.1" r="4.2" fill="#3f3f42"/>
<path d="M910.9 278.3 L913.1 280.1 L910.9 281.9Z" fill="#343437"/>
<circle cx="943.5" cy="280.1" r="4.2" fill="#fff"/>
<path d="M947.9 278.3 L950.1 280.1 L947.9 281.9Z" fill="#fff"/>
<circle cx="906.5" cy="303.1" r="4.2" fill="#3f3f42"/>
<path d="M910.9 301.3 L913.1 303.1 L910.9 304.9Z" fill="#343437"/>
<circle cx="666.5" cy="302.5" r="4.2" fill="#3f3f42"/>
<path d="M670.9 300.7 L673.1 302.5 L670.9 304.3Z" fill="#343437"/>
<circle cx="848.5" cy="302.5" r="4.2" fill="#fff"/>
<path d="M852.9 300.7 L855.1 302.5 L852.9 304.3Z" fill="#fff"/>
<circle cx="666.5" cy="325.5" r="3.3000000000000003" fill="#08090a" stroke="#2e2f33" stroke-width="1.8"/>
<path d="M670.9 323.7 L673.1 325.5 L670.9 327.3Z" fill="#2e2f33"/>
<circle cx="666.5" cy="348.5" r="4.2" fill="#3f3f42"/>
<path d="M670.9 346.7 L673.1 348.5 L670.9 350.3Z" fill="#343437"/>
<path d="M1031.8 291.4 L1035 294.6 L1038.2 291.4" fill="none" stroke="#000" stroke-opacity=".6" stroke-width="2" transform="translate(0.6,0.8)"/>
<path d="M1031.8 291.4 L1035 294.6 L1038.2 291.4" fill="none" stroke="#f4f4f4" stroke-width="1.7"/>
<circle cx="990.5" cy="316.1" r="4.2" fill="#3f3f42"/>
<path d="M994.9 314.3 L997.1 316.1 L994.9 317.9Z" fill="#343437"/>
<circle cx="1029.5" cy="316.1" r="4.2" fill="#fff"/>
<path d="M1033.9 314.3 L1036.1 316.1 L1033.9 317.9Z" fill="#fff"/>
<circle cx="990.5" cy="339.1" r="4.2" fill="#3f3f42"/>
<path d="M994.9 337.3 L997.1 339.1 L994.9 340.9Z" fill="#343437"/>
<path d="M1163.8 87.4 L1167 90.6 L1170.2 87.4" fill="none" stroke="#000" stroke-opacity=".6" stroke-width="2" transform="translate(0.6,0.8)"/>
<path d="M1163.8 87.4 L1167 90.6 L1170.2 87.4" fill="none" stroke="#f4f4f4" stroke-width="1.7"/>
<circle cx="1086.5" cy="111.6" r="4.2" fill="#3f3f42"/>
<path d="M1090.9 109.8 L1093.1 111.6 L1090.9 113.4Z" fill="#343437"/>
<circle cx="1161.5" cy="111.6" r="4.2" fill="#fff"/>
<path d="M1165.9 109.8 L1168.1 111.6 L1165.9 113.4Z" fill="#fff"/>
<circle cx="1086.5" cy="134.8" r="3.3000000000000003" fill="#08090a" stroke="#2e2f33" stroke-width="1.8"/>
<path d="M1090.9 133.0 L1093.1 134.8 L1090.9 136.6Z" fill="#2e2f33"/>
<circle cx="1086.5" cy="158.1" r="4.2" fill="#3f3f42"/>
<path d="M1090.9 156.3 L1093.1 158.1 L1090.9 159.9Z" fill="#343437"/>
<path d="M1163.8 327.4 L1167 330.6 L1170.2 327.4" fill="none" stroke="#000" stroke-opacity=".6" stroke-width="2" transform="translate(0.6,0.8)"/>
<path d="M1163.8 327.4 L1167 330.6 L1170.2 327.4" fill="none" stroke="#f4f4f4" stroke-width="1.7"/>
<circle cx="1086.5" cy="351.6" r="4.2" fill="#3f3f42"/>
<path d="M1090.9 349.8 L1093.1 351.6 L1090.9 353.4Z" fill="#343437"/>
<circle cx="1161.5" cy="351.6" r="4.2" fill="#fff"/>
<path d="M1165.9 349.8 L1168.1 351.6 L1165.9 353.4Z" fill="#fff"/>
<circle cx="1086.5" cy="374.8" r="3.3000000000000003" fill="#08090a" stroke="#2e2f33" stroke-width="1.8"/>
<path d="M1090.9 373.0 L1093.1 374.8 L1090.9 376.6Z" fill="#2e2f33"/>
<circle cx="1086.5" cy="398.1" r="4.2" fill="#3f3f42"/>
<path d="M1090.9 396.3 L1093.1 398.1 L1090.9 399.9Z" fill="#343437"/>
<path d="M1312.8 87.4 L1316 90.6 L1319.2 87.4" fill="none" stroke="#000" stroke-opacity=".6" stroke-width="2" transform="translate(0.6,0.8)"/>
<path d="M1312.8 87.4 L1316 90.6 L1319.2 87.4" fill="none" stroke="#f4f4f4" stroke-width="1.7"/>
<circle cx="1218.5" cy="111.6" r="4.2" fill="#fff"/>
<path d="M1222.9 109.8 L1225.1 111.6 L1222.9 113.4Z" fill="#fff"/>
<circle cx="1310.5" cy="111.6" r="4.2" fill="#fff"/>
<path d="M1314.9 109.8 L1317.1 111.6 L1314.9 113.4Z" fill="#fff"/>
<path d="M1312.8 327.4 L1316 330.6 L1319.2 327.4" fill="none" stroke="#000" stroke-opacity=".6" stroke-width="2" transform="translate(0.6,0.8)"/>
<path d="M1312.8 327.4 L1316 330.6 L1319.2 327.4" fill="none" stroke="#f4f4f4" stroke-width="1.7"/>
<circle cx="1218.5" cy="351.6" r="4.2" fill="#fff"/>
<path d="M1222.9 349.8 L1225.1 351.6 L1222.9 353.4Z" fill="#fff"/>
<circle cx="1310.5" cy="351.6" r="4.2" fill="#fff"/>
<path d="M1314.9 349.8 L1317.1 351.6 L1314.9 353.4Z" fill="#fff"/>
<path d="M1493.8 84.3 L1497 81.10000000000001 L1500.2 84.3" fill="none" stroke="#000" stroke-opacity=".6" stroke-width="2" transform="translate(0.6,0.8)"/>
<path d="M1493.8 84.3 L1497 81.10000000000001 L1500.2 84.3" fill="none" stroke="#f4f4f4" stroke-width="1.7"/>
<circle cx="1362.5" cy="111.7" r="4.2" fill="#3f3f42"/>
<path d="M1366.9 109.9 L1369.1 111.7 L1366.9 113.5Z" fill="#343437"/>
<circle cx="1491.5" cy="111.7" r="4.2" fill="#fff"/>
<path d="M1495.9 109.9 L1498.1 111.7 L1495.9 113.5Z" fill="#fff"/>
<circle cx="1362.5" cy="135" r="3.3000000000000003" fill="#08090a" stroke="#2e2f33" stroke-width="1.8"/>
<path d="M1366.9 133.2 L1369.1 135 L1366.9 136.8Z" fill="#2e2f33"/>
<circle cx="1491.5" cy="135" r="3.3000000000000003" fill="#0c0d0f" stroke="#e01010" stroke-width="1.9"/>
<path d="M1495.9 133.2 L1498.1 135 L1495.9 136.8Z" fill="#e01010"/>
<circle cx="1491.5" cy="158" r="3.3000000000000003" fill="#0c0d0f" stroke="#10c818" stroke-width="1.9"/>
<path d="M1495.9 156.2 L1498.1 158 L1495.9 159.8Z" fill="#10c818"/>
<circle cx="1491.5" cy="181" r="3.3000000000000003" fill="#0c0d0f" stroke="#0808b4" stroke-width="1.9"/>
<path d="M1495.9 179.2 L1498.1 181 L1495.9 182.8Z" fill="#0808b4"/>
<circle cx="1491.5" cy="204" r="3.3000000000000003" fill="#0c0d0f" stroke="#a8a8a8" stroke-width="1.9"/>
<path d="M1495.9 202.2 L1498.1 204 L1495.9 205.8Z" fill="#a8a8a8"/>
<circle cx="1491.5" cy="227" r="3.3000000000000003" fill="#0c0d0f" stroke="#d8d8d8" stroke-width="1.9"/>
<path d="M1495.9 225.2 L1498.1 227 L1495.9 228.8Z" fill="#d8d8d8"/>
<path d="M1425.8 244.4 L1429 247.6 L1432.2 244.4" fill="none" stroke="#000" stroke-opacity=".6" stroke-width="2" transform="translate(0.6,0.8)"/>
<path d="M1425.8 244.4 L1429 247.6 L1432.2 244.4" fill="none" stroke="#f4f4f4" stroke-width="1.7"/>
<path d="M1493.8 324.3 L1497 321.09999999999997 L1500.2 324.3" fill="none" stroke="#000" stroke-opacity=".6" stroke-width="2" transform="translate(0.6,0.8)"/>
<path d="M1493.8 324.3 L1497 321.09999999999997 L1500.2 324.3" fill="none" stroke="#f4f4f4" stroke-width="1.7"/>
<circle cx="1362.5" cy="351.7" r="4.2" fill="#3f3f42"/>
<path d="M1366.9 349.9 L1369.1 351.7 L1366.9 353.5Z" fill="#343437"/>
<circle cx="1491.5" cy="351.7" r="4.2" fill="#fff"/>
<path d="M1495.9 349.9 L1498.1 351.7 L1495.9 353.5Z" fill="#fff"/>
<circle cx="1362.5" cy="375" r="3.3000000000000003" fill="#08090a" stroke="#2e2f33" stroke-width="1.8"/>
<path d="M1366.9 373.2 L1369.1 375 L1366.9 376.8Z" fill="#2e2f33"/>
<circle cx="1491.5" cy="375" r="3.3000000000000003" fill="#0c0d0f" stroke="#e01010" stroke-width="1.9"/>
<path d="M1495.9 373.2 L1498.1 375 L1495.9 376.8Z" fill="#e01010"/>
<circle cx="1491.5" cy="398" r="3.3000000000000003" fill="#0c0d0f" stroke="#10c818" stroke-width="1.9"/>
<path d="M1495.9 396.2 L1498.1 398 L1495.9 399.8Z" fill="#10c818"/>
<circle cx="1491.5" cy="421" r="3.3000000000000003" fill="#0c0d0f" stroke="#0808b4" stroke-width="1.9"/>
<path d="M1495.9 419.2 L1498.1 421 L1495.9 422.8Z" fill="#0808b4"/>
<circle cx="1491.5" cy="444" r="3.3000000000000003" fill="#0c0d0f" stroke="#a8a8a8" stroke-width="1.9"/>
<path d="M1495.9 442.2 L1498.1 444 L1495.9 445.8Z" fill="#a8a8a8"/>
<circle cx="1491.5" cy="467" r="3.3000000000000003" fill="#0c0d0f" stroke="#d8d8d8" stroke-width="1.9"/>
<path d="M1495.9 465.2 L1498.1 467 L1495.9 468.8Z" fill="#d8d8d8"/>
<path d="M1425.8 484.4 L1429 487.6 L1432.2 484.4" fill="none" stroke="#000" stroke-opacity=".6" stroke-width="2" transform="translate(0.6,0.8)"/>
<path d="M1425.8 484.4 L1429 487.6 L1432.2 484.4" fill="none" stroke="#f4f4f4" stroke-width="1.7"/>
<path d="M1649.8 165.0 L1653 168.2 L1656.2 165.0" fill="none" stroke="#000" stroke-opacity=".6" stroke-width="2" transform="translate(0.6,0.8)"/>
<path d="M1649.8 165.0 L1653 168.2 L1656.2 165.0" fill="none" stroke="#f4f4f4" stroke-width="1.7"/>
<circle cx="1647.0" cy="196" r="4.2" fill="#fff"/>
<path d="M1651.4 194.2 L1653.6 196 L1651.4 197.8Z" fill="#fff"/>
<path d="M1643.8 404.99999999999994 L1647 408.2 L1650.2 404.99999999999994" fill="none" stroke="#000" stroke-opacity=".6" stroke-width="2" transform="translate(0.6,0.8)"/>
<path d="M1643.8 404.99999999999994 L1647 408.2 L1650.2 404.99999999999994" fill="none" stroke="#f4f4f4" stroke-width="1.7"/>
<circle cx="1641.0" cy="436" r="4.2" fill="#fff"/>
<path d="M1645.4 434.2 L1647.6 436 L1645.4 437.8Z" fill="#fff"/>
<path d="M1743.8 171.5 L1747 174.7 L1750.2 171.5" fill="none" stroke="#000" stroke-opacity=".6" stroke-width="2" transform="translate(0.6,0.8)"/>
<path d="M1743.8 171.5 L1747 174.7 L1750.2 171.5" fill="none" stroke="#f4f4f4" stroke-width="1.7"/>
<circle cx="1677.5" cy="196.5" r="4.2" fill="#3f3f42"/>
<path d="M1681.9 194.7 L1684.1 196.5 L1681.9 198.3Z" fill="#343437"/>
<circle cx="1741.5" cy="196.5" r="4.2" fill="#fff"/>
<path d="M1745.9 194.7 L1748.1 196.5 L1745.9 198.3Z" fill="#fff"/>
<circle cx="1677.5" cy="220.5" r="3.3000000000000003" fill="#08090a" stroke="#2e2f33" stroke-width="1.8"/>
<path d="M1681.9 218.7 L1684.1 220.5 L1681.9 222.3Z" fill="#2e2f33"/>
<path d="M1740.8 411.5 L1744 414.70000000000005 L1747.2 411.5" fill="none" stroke="#000" stroke-opacity=".6" stroke-width="2" transform="translate(0.6,0.8)"/>
<path d="M1740.8 411.5 L1744 414.70000000000005 L1747.2 411.5" fill="none" stroke="#f4f4f4" stroke-width="1.7"/>
<circle cx="1674.5" cy="436.5" r="4.2" fill="#3f3f42"/>
<path d="M1678.9 434.7 L1681.1 436.5 L1678.9 438.3Z" fill="#343437"/>
<circle cx="1738.5" cy="436.5" r="4.2" fill="#fff"/>
<path d="M1742.9 434.7 L1745.1 436.5 L1742.9 438.3Z" fill="#fff"/>
<circle cx="1674.5" cy="460.5" r="3.3000000000000003" fill="#08090a" stroke="#2e2f33" stroke-width="1.8"/>
<path d="M1678.9 458.7 L1681.1 460.5 L1678.9 462.3Z" fill="#2e2f33"/>
<path d="M1741.8 111.4 L1745 114.6 L1748.2 111.4" fill="none" stroke="#000" stroke-opacity=".6" stroke-width="2" transform="translate(0.6,0.8)"/>
<path d="M1741.8 111.4 L1745 114.6 L1748.2 111.4" fill="none" stroke="#f4f4f4" stroke-width="1.7"/>
<circle cx="1711" cy="136.2" r="4.2" fill="#fff"/>
<path d="M1715.4 134.4 L1717.6 136.2 L1715.4 138.0Z" fill="#fff"/>
<circle cx="1739.5" cy="136.2" r="4.2" fill="#fff"/>
<path d="M1743.9 134.4 L1746.1 136.2 L1743.9 138.0Z" fill="#fff"/>
<path d="M1738.8 349.4 L1742 352.6 L1745.2 349.4" fill="none" stroke="#000" stroke-opacity=".6" stroke-width="2" transform="translate(0.6,0.8)"/>
<path d="M1738.8 349.4 L1742 352.6 L1745.2 349.4" fill="none" stroke="#f4f4f4" stroke-width="1.7"/>
<circle cx="1708" cy="374.2" r="4.2" fill="#fff"/>
<path d="M1712.4 372.4 L1714.6 374.2 L1712.4 376.0Z" fill="#fff"/>
<circle cx="1736.5" cy="374.2" r="4.2" fill="#fff"/>
<path d="M1740.9 372.4 L1743.1 374.2 L1740.9 376.0Z" fill="#fff"/>
<circle cx="1782.5" cy="111" r="4.2" fill="#3f3f42"/>
<path d="M1786.9 109.2 L1789.1 111 L1786.9 112.8Z" fill="#343437"/>
<circle cx="1882.5" cy="111" r="4.2" fill="#fff"/>
<path d="M1886.9 109.2 L1889.1 111 L1886.9 112.8Z" fill="#fff"/>
<circle cx="1782.5" cy="133.6" r="4.2" fill="#3f3f42"/>
<path d="M1786.9 131.8 L1789.1 133.6 L1786.9 135.4Z" fill="#343437"/>
<circle cx="1782.5" cy="351" r="4.2" fill="#3f3f42"/>
<path d="M1786.9 349.2 L1789.1 351 L1786.9 352.8Z" fill="#343437"/>
<circle cx="1882.5" cy="351" r="4.2" fill="#fff"/>
<path d="M1886.9 349.2 L1889.1 351 L1886.9 352.8Z" fill="#fff"/>
<circle cx="1782.5" cy="373.6" r="4.2" fill="#3f3f42"/>
<path d="M1786.9 371.8 L1789.1 373.6 L1786.9 375.4Z" fill="#343437"/>
<circle cx="1950.5" cy="218.8" r="4.2" fill="#fff"/>
<path d="M1954.9 217.0 L1957.1 218.8 L1954.9 220.6Z" fill="#fff"/>
<circle cx="2095.5" cy="218.8" r="4.2" fill="#fff"/>
<path d="M2099.9 217.0 L2102.1 218.8 L2099.9 220.6Z" fill="#fff"/>
<circle cx="1950.5" cy="241.6" r="4.2" fill="#fff"/>
<path d="M1954.9 239.8 L1957.1 241.6 L1954.9 243.4Z" fill="#fff"/>
<path d="M2065.8 462.40000000000003 L2069 459.2 L2072.2 462.40000000000003" fill="none" stroke="#000" stroke-opacity=".6" stroke-width="2" transform="translate(0.6,0.8)"/>
<path d="M2065.8 462.40000000000003 L2069 459.2 L2072.2 462.40000000000003" fill="none" stroke="#f4f4f4" stroke-width="1.7"/>
<circle cx="2064" cy="484" r="4.2" fill="#fff"/>
<path d="M2068.4 482.2 L2070.6 484 L2068.4 485.8Z" fill="#fff"/>
<circle cx="2064" cy="507" r="3.3000000000000003" fill="#0c0d0f" stroke="#e01010" stroke-width="1.9"/>
<path d="M2068.4 505.2 L2070.6 507 L2068.4 508.8Z" fill="#e01010"/>
<circle cx="2064" cy="530" r="3.3000000000000003" fill="#0c0d0f" stroke="#10c818" stroke-width="1.9"/>
<path d="M2068.4 528.2 L2070.6 530 L2068.4 531.8Z" fill="#10c818"/>
<circle cx="2064" cy="553" r="3.3000000000000003" fill="#0c0d0f" stroke="#0808b4" stroke-width="1.9"/>
<path d="M2068.4 551.2 L2070.6 553 L2068.4 554.8Z" fill="#0808b4"/>
<path d="M2174.8 435.4 L2178 438.6 L2181.2 435.4" fill="none" stroke="#000" stroke-opacity=".6" stroke-width="2" transform="translate(0.6,0.8)"/>
<path d="M2174.8 435.4 L2178 438.6 L2181.2 435.4" fill="none" stroke="#f4f4f4" stroke-width="1.7"/>
<circle cx="2119.5" cy="460" r="4.2" fill="#3f3f42"/>
<path d="M2123.9 458.2 L2126.1 460 L2123.9 461.8Z" fill="#343437"/>
<circle cx="2172.5" cy="460" r="4.2" fill="#fff"/>
<path d="M2176.9 458.2 L2179.1 460 L2176.9 461.8Z" fill="#fff"/>
<circle cx="2119.5" cy="483" r="4.2" fill="#3f3f42"/>
<path d="M2123.9 481.2 L2126.1 483 L2123.9 484.8Z" fill="#343437"/>
<circle cx="2119.5" cy="506" r="4.2" fill="#3f3f42"/>
<path d="M2123.9 504.2 L2126.1 506 L2123.9 507.8Z" fill="#343437"/>
<path d="M2289.8 435.4 L2293 438.6 L2296.2 435.4" fill="none" stroke="#000" stroke-opacity=".6" stroke-width="2" transform="translate(0.6,0.8)"/>
<path d="M2289.8 435.4 L2293 438.6 L2296.2 435.4" fill="none" stroke="#f4f4f4" stroke-width="1.7"/>
<circle cx="2216" cy="460.5" r="4.2" fill="#fff"/>
<path d="M2220.4 458.7 L2222.6 460.5 L2220.4 462.3Z" fill="#fff"/>
<circle cx="2288" cy="460.5" r="3.3000000000000003" fill="#0c0d0f" stroke="#d8d8d8" stroke-width="1.9"/>
<path d="M2292.4 458.7 L2294.6 460.5 L2292.4 462.3Z" fill="#d8d8d8"/>
<path d="M1399.8 549.1 L1403 552.3000000000001 L1406.2 549.1" fill="none" stroke="#000" stroke-opacity=".6" stroke-width="2" transform="translate(0.6,0.8)"/>
<path d="M1399.8 549.1 L1403 552.3000000000001 L1406.2 549.1" fill="none" stroke="#f4f4f4" stroke-width="1.7"/>
<circle cx="1397" cy="580" r="4.2" fill="#f20000"/>
<path d="M1401.4 578.2 L1403.6 580 L1401.4 581.8Z" fill="#f20000"/>
<path d="M1406.8 619.0 L1410 622.2 L1413.2 619.0" fill="none" stroke="#000" stroke-opacity=".6" stroke-width="2" transform="translate(0.6,0.8)"/>
<path d="M1406.8 619.0 L1410 622.2 L1413.2 619.0" fill="none" stroke="#f4f4f4" stroke-width="1.7"/>
<circle cx="1404.0" cy="650" r="4.2" fill="#fff"/>
<path d="M1408.4 648.2 L1410.6 650 L1408.4 651.8Z" fill="#fff"/>
<path d="M1505.8 577.4 L1509 580.6 L1512.2 577.4" fill="none" stroke="#000" stroke-opacity=".6" stroke-width="2" transform="translate(0.6,0.8)"/>
<path d="M1505.8 577.4 L1509 580.6 L1512.2 577.4" fill="none" stroke="#f4f4f4" stroke-width="1.7"/>
<circle cx="1455.5" cy="602.1" r="4.2" fill="#3f3f42"/>
<path d="M1459.9 600.3 L1462.1 602.1 L1459.9 603.9Z" fill="#343437"/>
<circle cx="1503.5" cy="602.1" r="4.2" fill="#fff"/>
<path d="M1507.9 600.3 L1510.1 602.1 L1507.9 603.9Z" fill="#fff"/>
<circle cx="1455.5" cy="625.1" r="4.2" fill="#3f3f42"/>
<path d="M1459.9 623.3 L1462.1 625.1 L1459.9 626.9Z" fill="#343437"/>
<path d="M1619.8 611.4 L1623 614.6 L1626.2 611.4" fill="none" stroke="#000" stroke-opacity=".6" stroke-width="2" transform="translate(0.6,0.8)"/>
<path d="M1619.8 611.4 L1623 614.6 L1626.2 611.4" fill="none" stroke="#f4f4f4" stroke-width="1.7"/>
<circle cx="1578.5" cy="636.1" r="4.2" fill="#3f3f42"/>
<path d="M1582.9 634.3 L1585.1 636.1 L1582.9 637.9Z" fill="#343437"/>
<circle cx="1617.5" cy="636.1" r="4.2" fill="#fff"/>
<path d="M1621.9 634.3 L1624.1 636.1 L1621.9 637.9Z" fill="#fff"/>
<circle cx="1578.5" cy="659.1" r="4.2" fill="#3f3f42"/>
<path d="M1582.9 657.3 L1585.1 659.1 L1582.9 660.9Z" fill="#343437"/>
<path d="M1711.8 611.4 L1715 614.6 L1718.2 611.4" fill="none" stroke="#000" stroke-opacity=".6" stroke-width="2" transform="translate(0.6,0.8)"/>
<path d="M1711.8 611.4 L1715 614.6 L1718.2 611.4" fill="none" stroke="#f4f4f4" stroke-width="1.7"/>
<circle cx="1663" cy="636.2" r="4.2" fill="#fff"/>
<path d="M1667.4 634.4 L1669.6 636.2 L1667.4 638.0Z" fill="#fff"/>
<circle cx="1709.5" cy="636.2" r="4.2" fill="#fff"/>
<path d="M1713.9 634.4 L1716.1 636.2 L1713.9 638.0Z" fill="#fff"/>
<path d="M1520.8 691.0 L1524 694.2 L1527.2 691.0" fill="none" stroke="#000" stroke-opacity=".6" stroke-width="2" transform="translate(0.6,0.8)"/>
<path d="M1520.8 691.0 L1524 694.2 L1527.2 691.0" fill="none" stroke="#f4f4f4" stroke-width="1.7"/>
<circle cx="1518.0" cy="722" r="4.2" fill="#fff"/>
<path d="M1522.4 720.2 L1524.6 722 L1522.4 723.8Z" fill="#fff"/>
<path d="M1716.8 699.9 L1720 703.1 L1723.2 699.9" fill="none" stroke="#000" stroke-opacity=".6" stroke-width="2" transform="translate(0.6,0.8)"/>
<path d="M1716.8 699.9 L1720 703.1 L1723.2 699.9" fill="none" stroke="#f4f4f4" stroke-width="1.7"/>
<circle cx="1579" cy="724.5" r="4.2" fill="#fff"/>
<path d="M1583.4 722.7 L1585.6 724.5 L1583.4 726.3Z" fill="#fff"/>
<circle cx="1715" cy="724.5" r="4.2" fill="#fff"/>
<path d="M1719.4 722.7 L1721.6 724.5 L1719.4 726.3Z" fill="#fff"/>
<path d="M1833.8 699.4 L1837 702.6 L1840.2 699.4" fill="none" stroke="#000" stroke-opacity=".6" stroke-width="2" transform="translate(0.6,0.8)"/>
<path d="M1833.8 699.4 L1837 702.6 L1840.2 699.4" fill="none" stroke="#f4f4f4" stroke-width="1.7"/>
<circle cx="1794.5" cy="724.1" r="4.2" fill="#3f3f42"/>
<path d="M1798.9 722.3 L1801.1 724.1 L1798.9 725.9Z" fill="#343437"/>
<circle cx="1831.5" cy="724.1" r="4.2" fill="#fff"/>
<path d="M1835.9 722.3 L1838.1 724.1 L1835.9 725.9Z" fill="#fff"/>
<circle cx="1794.5" cy="747.1" r="4.2" fill="#3f3f42"/>
<path d="M1798.9 745.3 L1801.1 747.1 L1798.9 748.9Z" fill="#343437"/>
<path d="M1927.8 698.4 L1931 701.6 L1934.2 698.4" fill="none" stroke="#000" stroke-opacity=".6" stroke-width="2" transform="translate(0.6,0.8)"/>
<path d="M1927.8 698.4 L1931 701.6 L1934.2 698.4" fill="none" stroke="#f4f4f4" stroke-width="1.7"/>
<circle cx="1879" cy="723.2" r="4.2" fill="#fff"/>
<path d="M1883.4 721.4 L1885.6 723.2 L1883.4 725.0Z" fill="#fff"/>
<circle cx="1925.5" cy="723.2" r="4.2" fill="#fff"/>
<path d="M1929.9 721.4 L1932.1 723.2 L1929.9 725.0Z" fill="#fff"/>
<path d="M1343.8 821.9 L1347 825.1 L1350.2 821.9" fill="none" stroke="#000" stroke-opacity=".6" stroke-width="2" transform="translate(0.6,0.8)"/>
<path d="M1343.8 821.9 L1347 825.1 L1350.2 821.9" fill="none" stroke="#f4f4f4" stroke-width="1.7"/>
<circle cx="1341.5" cy="846.5" r="4.2" fill="#fff"/>
<path d="M1345.9 844.7 L1348.1 846.5 L1345.9 848.3Z" fill="#fff"/>
<path d="M1487.8 820.4 L1491 823.6 L1494.2 820.4" fill="none" stroke="#000" stroke-opacity=".6" stroke-width="2" transform="translate(0.6,0.8)"/>
<path d="M1487.8 820.4 L1491 823.6 L1494.2 820.4" fill="none" stroke="#f4f4f4" stroke-width="1.7"/>
<circle cx="1438.5" cy="845.1" r="4.2" fill="#3f3f42"/>
<path d="M1442.9 843.3 L1445.1 845.1 L1442.9 846.9Z" fill="#343437"/>
<circle cx="1485.5" cy="845.1" r="4.2" fill="#fff"/>
<path d="M1489.9 843.3 L1492.1 845.1 L1489.9 846.9Z" fill="#fff"/>
<circle cx="1438.5" cy="868.1" r="4.2" fill="#3f3f42"/>
<path d="M1442.9 866.3 L1445.1 868.1 L1442.9 869.9Z" fill="#343437"/>
<path d="M1622.8 822.4 L1626 825.6 L1629.2 822.4" fill="none" stroke="#000" stroke-opacity=".6" stroke-width="2" transform="translate(0.6,0.8)"/>
<path d="M1622.8 822.4 L1626 825.6 L1629.2 822.4" fill="none" stroke="#f4f4f4" stroke-width="1.7"/>
<circle cx="1583.5" cy="847.1" r="4.2" fill="#3f3f42"/>
<path d="M1587.9 845.3 L1590.1 847.1 L1587.9 848.9Z" fill="#343437"/>
<circle cx="1620.5" cy="847.1" r="4.2" fill="#fff"/>
<path d="M1624.9 845.3 L1627.1 847.1 L1624.9 848.9Z" fill="#fff"/>
<circle cx="1583.5" cy="870.1" r="4.2" fill="#3f3f42"/>
<path d="M1587.9 868.3 L1590.1 870.1 L1587.9 871.9Z" fill="#343437"/>
<path d="M1704.8 821.4 L1708 824.6 L1711.2 821.4" fill="none" stroke="#000" stroke-opacity=".6" stroke-width="2" transform="translate(0.6,0.8)"/>
<path d="M1704.8 821.4 L1708 824.6 L1711.2 821.4" fill="none" stroke="#f4f4f4" stroke-width="1.7"/>
<circle cx="1656" cy="846.2" r="4.2" fill="#fff"/>
<path d="M1660.4 844.4 L1662.6 846.2 L1660.4 848.0Z" fill="#fff"/>
<circle cx="1702.5" cy="846.2" r="4.2" fill="#fff"/>
<path d="M1706.9 844.4 L1709.1 846.2 L1706.9 848.0Z" fill="#fff"/>
<path d="M1385.8 890.0 L1389 893.2 L1392.2 890.0" fill="none" stroke="#000" stroke-opacity=".6" stroke-width="2" transform="translate(0.6,0.8)"/>
<path d="M1385.8 890.0 L1389 893.2 L1392.2 890.0" fill="none" stroke="#f4f4f4" stroke-width="1.7"/>
<circle cx="1383.0" cy="921" r="4.2" fill="#fff"/>
<path d="M1387.4 919.2 L1389.6 921 L1387.4 922.8Z" fill="#fff"/>
<path d="M1532.8 896.4 L1536 899.6 L1539.2 896.4" fill="none" stroke="#000" stroke-opacity=".6" stroke-width="2" transform="translate(0.6,0.8)"/>
<path d="M1532.8 896.4 L1536 899.6 L1539.2 896.4" fill="none" stroke="#f4f4f4" stroke-width="1.7"/>
<circle cx="1530.5" cy="920.5" r="4.2" fill="#fff"/>
<path d="M1534.9 918.7 L1537.1 920.5 L1534.9 922.3Z" fill="#fff"/></svg>
</div></body></html>
